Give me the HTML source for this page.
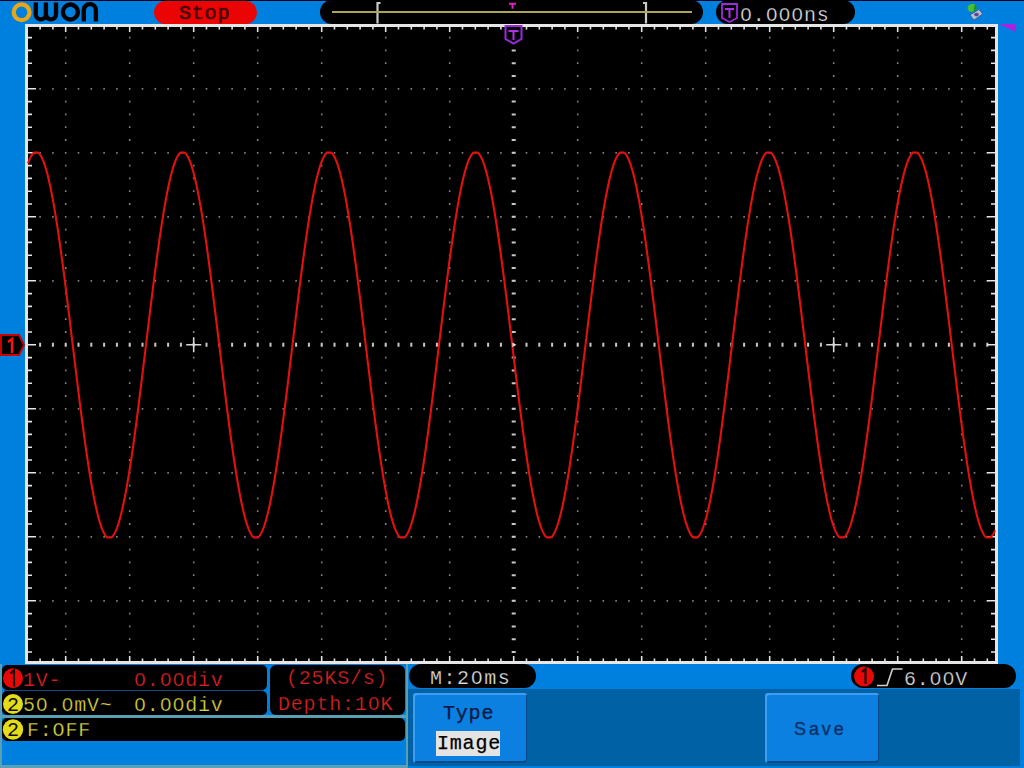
<!DOCTYPE html>
<html><head><meta charset="utf-8"><style>
html,body{margin:0;padding:0;}
body{width:1024px;height:768px;overflow:hidden;position:relative;background:#0080de;font-family:"Liberation Mono", monospace;}
.a{position:absolute;}
.z{position:relative;}
.z::after{content:'';position:absolute;left:3.9px;top:7.8px;width:4.2px;height:5.3px;background:#000;}
.t{position:absolute;white-space:pre;font-family:"Liberation Mono", monospace;font-size:20px;letter-spacing:0.8px;line-height:1;-webkit-text-stroke:0.25px #000;}
</style></head><body>
<div class="a" style="left:0;top:0;width:1024px;height:1.3px;background:#00001c"></div>

<!-- OWON logo -->
<svg class="a" style="left:0;top:0" width="110" height="26" viewBox="0 0 110 26">
<circle cx="21.6" cy="12.3" r="7.9" fill="none" stroke="#eaa614" stroke-width="4.2"/>
<path d="M35.8 2.4V14.3A5.05 5.05 0 0 0 45.9 14.3V2.4M45.9 14.3A5.05 5.05 0 0 0 56 14.3V2.4" fill="none" stroke="#000" stroke-width="4.4"/>
<circle cx="70.4" cy="12" r="7.5" fill="none" stroke="#000" stroke-width="4.4"/>
<path d="M83.8 21.6V10.2A5.6 5.6 0 0 1 95.9 10.2V21.6" fill="none" stroke="#000" stroke-width="4.4"/>
</svg>

<!-- Stop pill -->
<div class="a" style="left:154px;top:1px;width:103px;height:23px;border-radius:11.5px;background:#ea0404"></div>
<div class="t" style="left:179px;top:4px;color:#4a0000;-webkit-text-stroke:0.7px #4a0000">Stop</div>

<!-- time base pill -->
<div class="a" style="left:320px;top:0px;width:383px;height:24px;border-radius:12px/12px;background:#000"></div>
<svg class="a" style="left:370px;top:0;overflow:visible" width="290" height="26">
<path d="M10.5 3h-3v20.5" fill="none" stroke="#c8c8c8" stroke-width="2.2"/>
<path d="M273 3h3v20.5" fill="none" stroke="#c8c8c8" stroke-width="2.2"/>
<path d="M-38 12h360" stroke="#aaa858" stroke-width="2"/>
<path d="M139 3.8h7M142.5 3.8v5" fill="none" stroke="#e020c0" stroke-width="2"/>
</svg>

<!-- trigger pos pill -->
<div class="a" style="left:716px;top:0px;width:139px;height:24px;border-radius:12px;background:#000"></div>
<svg class="a" style="left:716px;top:0" width="26" height="26">
<path d="M6 4h15v14l-7.5 4l-7.5-4z" fill="#000" stroke="#9a2ae0" stroke-width="1.8"/>
<path d="M9 9h9M13.5 9v9" fill="none" stroke="#b030e8" stroke-width="2"/>
</svg>
<div class="t" style="left:740px;top:6px;color:#dcdcdc"><span class="z">0</span>.<span class="z">0</span><span class="z">0</span><span class="z">0</span>ns</div>

<!-- usb icon -->
<svg class="a" style="left:962px;top:0" width="26" height="24">
<path d="M8 15L17 9.4L20.6 14L12 20z" fill="#b4c0d0" stroke="#3a5a90" stroke-width="0.8"/>
<ellipse cx="14.5" cy="14.6" rx="2.4" ry="1.8" fill="#5a4a8a"/>
<ellipse cx="10" cy="7.8" rx="4.4" ry="3.8" transform="rotate(-25 10 7.8)" fill="#44c030"/>
<path d="M12.5 4.5a4 4 0 0 1 1.6 5.5l-2.5 2z" fill="#1e9020"/>
</svg>

<!-- grid -->
<div class="a" style="left:25px;top:24px;width:967px;height:634px;border:3px solid #e6e6e6;background:#000"></div>
<svg class="a" style="left:0;top:0" width="1024" height="768" viewBox="0 0 1024 768">
<path d="M39.3 87.9h1.6v1.8h-1.6zM39.3 151.9h1.6v1.8h-1.6zM39.3 215.9h1.6v1.8h-1.6zM39.3 279.9h1.6v1.8h-1.6zM39.3 407.9h1.6v1.8h-1.6zM39.3 471.9h1.6v1.8h-1.6zM39.3 535.9h1.6v1.8h-1.6zM39.3 599.9h1.6v1.8h-1.6zM52.1 87.9h1.6v1.8h-1.6zM52.1 151.9h1.6v1.8h-1.6zM52.1 215.9h1.6v1.8h-1.6zM52.1 279.9h1.6v1.8h-1.6zM52.1 407.9h1.6v1.8h-1.6zM52.1 471.9h1.6v1.8h-1.6zM52.1 535.9h1.6v1.8h-1.6zM52.1 599.9h1.6v1.8h-1.6zM64.9 36.7h1.6v1.8h-1.6zM64.9 49.5h1.6v1.8h-1.6zM64.9 62.3h1.6v1.8h-1.6zM64.9 75.1h1.6v1.8h-1.6zM64.9 87.9h1.6v1.8h-1.6zM64.9 100.7h1.6v1.8h-1.6zM64.9 113.5h1.6v1.8h-1.6zM64.9 126.3h1.6v1.8h-1.6zM64.9 139.1h1.6v1.8h-1.6zM64.9 151.9h1.6v1.8h-1.6zM64.9 164.7h1.6v1.8h-1.6zM64.9 177.5h1.6v1.8h-1.6zM64.9 190.3h1.6v1.8h-1.6zM64.9 203.1h1.6v1.8h-1.6zM64.9 215.9h1.6v1.8h-1.6zM64.9 228.7h1.6v1.8h-1.6zM64.9 241.5h1.6v1.8h-1.6zM64.9 254.3h1.6v1.8h-1.6zM64.9 267.1h1.6v1.8h-1.6zM64.9 279.9h1.6v1.8h-1.6zM64.9 292.7h1.6v1.8h-1.6zM64.9 305.5h1.6v1.8h-1.6zM64.9 318.3h1.6v1.8h-1.6zM64.9 331.1h1.6v1.8h-1.6zM64.9 343.9h1.6v1.8h-1.6zM64.9 356.7h1.6v1.8h-1.6zM64.9 369.5h1.6v1.8h-1.6zM64.9 382.3h1.6v1.8h-1.6zM64.9 395.1h1.6v1.8h-1.6zM64.9 407.9h1.6v1.8h-1.6zM64.9 420.7h1.6v1.8h-1.6zM64.9 433.5h1.6v1.8h-1.6zM64.9 446.3h1.6v1.8h-1.6zM64.9 459.1h1.6v1.8h-1.6zM64.9 471.9h1.6v1.8h-1.6zM64.9 484.7h1.6v1.8h-1.6zM64.9 497.5h1.6v1.8h-1.6zM64.9 510.3h1.6v1.8h-1.6zM64.9 523.1h1.6v1.8h-1.6zM64.9 535.9h1.6v1.8h-1.6zM64.9 548.7h1.6v1.8h-1.6zM64.9 561.5h1.6v1.8h-1.6zM64.9 574.3h1.6v1.8h-1.6zM64.9 587.1h1.6v1.8h-1.6zM64.9 599.9h1.6v1.8h-1.6zM64.9 612.7h1.6v1.8h-1.6zM64.9 625.5h1.6v1.8h-1.6zM64.9 638.3h1.6v1.8h-1.6zM64.9 651.1h1.6v1.8h-1.6zM77.7 87.9h1.6v1.8h-1.6zM77.7 151.9h1.6v1.8h-1.6zM77.7 215.9h1.6v1.8h-1.6zM77.7 279.9h1.6v1.8h-1.6zM77.7 407.9h1.6v1.8h-1.6zM77.7 471.9h1.6v1.8h-1.6zM77.7 535.9h1.6v1.8h-1.6zM77.7 599.9h1.6v1.8h-1.6zM90.5 87.9h1.6v1.8h-1.6zM90.5 151.9h1.6v1.8h-1.6zM90.5 215.9h1.6v1.8h-1.6zM90.5 279.9h1.6v1.8h-1.6zM90.5 407.9h1.6v1.8h-1.6zM90.5 471.9h1.6v1.8h-1.6zM90.5 535.9h1.6v1.8h-1.6zM90.5 599.9h1.6v1.8h-1.6zM103.3 87.9h1.6v1.8h-1.6zM103.3 151.9h1.6v1.8h-1.6zM103.3 215.9h1.6v1.8h-1.6zM103.3 279.9h1.6v1.8h-1.6zM103.3 407.9h1.6v1.8h-1.6zM103.3 471.9h1.6v1.8h-1.6zM103.3 535.9h1.6v1.8h-1.6zM103.3 599.9h1.6v1.8h-1.6zM116.1 87.9h1.6v1.8h-1.6zM116.1 151.9h1.6v1.8h-1.6zM116.1 215.9h1.6v1.8h-1.6zM116.1 279.9h1.6v1.8h-1.6zM116.1 407.9h1.6v1.8h-1.6zM116.1 471.9h1.6v1.8h-1.6zM116.1 535.9h1.6v1.8h-1.6zM116.1 599.9h1.6v1.8h-1.6zM128.9 36.7h1.6v1.8h-1.6zM128.9 49.5h1.6v1.8h-1.6zM128.9 62.3h1.6v1.8h-1.6zM128.9 75.1h1.6v1.8h-1.6zM128.9 87.9h1.6v1.8h-1.6zM128.9 100.7h1.6v1.8h-1.6zM128.9 113.5h1.6v1.8h-1.6zM128.9 126.3h1.6v1.8h-1.6zM128.9 139.1h1.6v1.8h-1.6zM128.9 151.9h1.6v1.8h-1.6zM128.9 164.7h1.6v1.8h-1.6zM128.9 177.5h1.6v1.8h-1.6zM128.9 190.3h1.6v1.8h-1.6zM128.9 203.1h1.6v1.8h-1.6zM128.9 215.9h1.6v1.8h-1.6zM128.9 228.7h1.6v1.8h-1.6zM128.9 241.5h1.6v1.8h-1.6zM128.9 254.3h1.6v1.8h-1.6zM128.9 267.1h1.6v1.8h-1.6zM128.9 279.9h1.6v1.8h-1.6zM128.9 292.7h1.6v1.8h-1.6zM128.9 305.5h1.6v1.8h-1.6zM128.9 318.3h1.6v1.8h-1.6zM128.9 331.1h1.6v1.8h-1.6zM128.9 343.9h1.6v1.8h-1.6zM128.9 356.7h1.6v1.8h-1.6zM128.9 369.5h1.6v1.8h-1.6zM128.9 382.3h1.6v1.8h-1.6zM128.9 395.1h1.6v1.8h-1.6zM128.9 407.9h1.6v1.8h-1.6zM128.9 420.7h1.6v1.8h-1.6zM128.9 433.5h1.6v1.8h-1.6zM128.9 446.3h1.6v1.8h-1.6zM128.9 459.1h1.6v1.8h-1.6zM128.9 471.9h1.6v1.8h-1.6zM128.9 484.7h1.6v1.8h-1.6zM128.9 497.5h1.6v1.8h-1.6zM128.9 510.3h1.6v1.8h-1.6zM128.9 523.1h1.6v1.8h-1.6zM128.9 535.9h1.6v1.8h-1.6zM128.9 548.7h1.6v1.8h-1.6zM128.9 561.5h1.6v1.8h-1.6zM128.9 574.3h1.6v1.8h-1.6zM128.9 587.1h1.6v1.8h-1.6zM128.9 599.9h1.6v1.8h-1.6zM128.9 612.7h1.6v1.8h-1.6zM128.9 625.5h1.6v1.8h-1.6zM128.9 638.3h1.6v1.8h-1.6zM128.9 651.1h1.6v1.8h-1.6zM141.7 87.9h1.6v1.8h-1.6zM141.7 151.9h1.6v1.8h-1.6zM141.7 215.9h1.6v1.8h-1.6zM141.7 279.9h1.6v1.8h-1.6zM141.7 407.9h1.6v1.8h-1.6zM141.7 471.9h1.6v1.8h-1.6zM141.7 535.9h1.6v1.8h-1.6zM141.7 599.9h1.6v1.8h-1.6zM154.5 87.9h1.6v1.8h-1.6zM154.5 151.9h1.6v1.8h-1.6zM154.5 215.9h1.6v1.8h-1.6zM154.5 279.9h1.6v1.8h-1.6zM154.5 407.9h1.6v1.8h-1.6zM154.5 471.9h1.6v1.8h-1.6zM154.5 535.9h1.6v1.8h-1.6zM154.5 599.9h1.6v1.8h-1.6zM167.3 87.9h1.6v1.8h-1.6zM167.3 151.9h1.6v1.8h-1.6zM167.3 215.9h1.6v1.8h-1.6zM167.3 279.9h1.6v1.8h-1.6zM167.3 407.9h1.6v1.8h-1.6zM167.3 471.9h1.6v1.8h-1.6zM167.3 535.9h1.6v1.8h-1.6zM167.3 599.9h1.6v1.8h-1.6zM180.1 87.9h1.6v1.8h-1.6zM180.1 151.9h1.6v1.8h-1.6zM180.1 215.9h1.6v1.8h-1.6zM180.1 279.9h1.6v1.8h-1.6zM180.1 407.9h1.6v1.8h-1.6zM180.1 471.9h1.6v1.8h-1.6zM180.1 535.9h1.6v1.8h-1.6zM180.1 599.9h1.6v1.8h-1.6zM192.9 36.7h1.6v1.8h-1.6zM192.9 49.5h1.6v1.8h-1.6zM192.9 62.3h1.6v1.8h-1.6zM192.9 75.1h1.6v1.8h-1.6zM192.9 87.9h1.6v1.8h-1.6zM192.9 100.7h1.6v1.8h-1.6zM192.9 113.5h1.6v1.8h-1.6zM192.9 126.3h1.6v1.8h-1.6zM192.9 139.1h1.6v1.8h-1.6zM192.9 151.9h1.6v1.8h-1.6zM192.9 164.7h1.6v1.8h-1.6zM192.9 177.5h1.6v1.8h-1.6zM192.9 190.3h1.6v1.8h-1.6zM192.9 203.1h1.6v1.8h-1.6zM192.9 215.9h1.6v1.8h-1.6zM192.9 228.7h1.6v1.8h-1.6zM192.9 241.5h1.6v1.8h-1.6zM192.9 254.3h1.6v1.8h-1.6zM192.9 267.1h1.6v1.8h-1.6zM192.9 279.9h1.6v1.8h-1.6zM192.9 292.7h1.6v1.8h-1.6zM192.9 305.5h1.6v1.8h-1.6zM192.9 318.3h1.6v1.8h-1.6zM192.9 331.1h1.6v1.8h-1.6zM192.9 343.9h1.6v1.8h-1.6zM192.9 356.7h1.6v1.8h-1.6zM192.9 369.5h1.6v1.8h-1.6zM192.9 382.3h1.6v1.8h-1.6zM192.9 395.1h1.6v1.8h-1.6zM192.9 407.9h1.6v1.8h-1.6zM192.9 420.7h1.6v1.8h-1.6zM192.9 433.5h1.6v1.8h-1.6zM192.9 446.3h1.6v1.8h-1.6zM192.9 459.1h1.6v1.8h-1.6zM192.9 471.9h1.6v1.8h-1.6zM192.9 484.7h1.6v1.8h-1.6zM192.9 497.5h1.6v1.8h-1.6zM192.9 510.3h1.6v1.8h-1.6zM192.9 523.1h1.6v1.8h-1.6zM192.9 535.9h1.6v1.8h-1.6zM192.9 548.7h1.6v1.8h-1.6zM192.9 561.5h1.6v1.8h-1.6zM192.9 574.3h1.6v1.8h-1.6zM192.9 587.1h1.6v1.8h-1.6zM192.9 599.9h1.6v1.8h-1.6zM192.9 612.7h1.6v1.8h-1.6zM192.9 625.5h1.6v1.8h-1.6zM192.9 638.3h1.6v1.8h-1.6zM192.9 651.1h1.6v1.8h-1.6zM205.7 87.9h1.6v1.8h-1.6zM205.7 151.9h1.6v1.8h-1.6zM205.7 215.9h1.6v1.8h-1.6zM205.7 279.9h1.6v1.8h-1.6zM205.7 407.9h1.6v1.8h-1.6zM205.7 471.9h1.6v1.8h-1.6zM205.7 535.9h1.6v1.8h-1.6zM205.7 599.9h1.6v1.8h-1.6zM218.5 87.9h1.6v1.8h-1.6zM218.5 151.9h1.6v1.8h-1.6zM218.5 215.9h1.6v1.8h-1.6zM218.5 279.9h1.6v1.8h-1.6zM218.5 407.9h1.6v1.8h-1.6zM218.5 471.9h1.6v1.8h-1.6zM218.5 535.9h1.6v1.8h-1.6zM218.5 599.9h1.6v1.8h-1.6zM231.3 87.9h1.6v1.8h-1.6zM231.3 151.9h1.6v1.8h-1.6zM231.3 215.9h1.6v1.8h-1.6zM231.3 279.9h1.6v1.8h-1.6zM231.3 407.9h1.6v1.8h-1.6zM231.3 471.9h1.6v1.8h-1.6zM231.3 535.9h1.6v1.8h-1.6zM231.3 599.9h1.6v1.8h-1.6zM244.1 87.9h1.6v1.8h-1.6zM244.1 151.9h1.6v1.8h-1.6zM244.1 215.9h1.6v1.8h-1.6zM244.1 279.9h1.6v1.8h-1.6zM244.1 407.9h1.6v1.8h-1.6zM244.1 471.9h1.6v1.8h-1.6zM244.1 535.9h1.6v1.8h-1.6zM244.1 599.9h1.6v1.8h-1.6zM256.9 36.7h1.6v1.8h-1.6zM256.9 49.5h1.6v1.8h-1.6zM256.9 62.3h1.6v1.8h-1.6zM256.9 75.1h1.6v1.8h-1.6zM256.9 87.9h1.6v1.8h-1.6zM256.9 100.7h1.6v1.8h-1.6zM256.9 113.5h1.6v1.8h-1.6zM256.9 126.3h1.6v1.8h-1.6zM256.9 139.1h1.6v1.8h-1.6zM256.9 151.9h1.6v1.8h-1.6zM256.9 164.7h1.6v1.8h-1.6zM256.9 177.5h1.6v1.8h-1.6zM256.9 190.3h1.6v1.8h-1.6zM256.9 203.1h1.6v1.8h-1.6zM256.9 215.9h1.6v1.8h-1.6zM256.9 228.7h1.6v1.8h-1.6zM256.9 241.5h1.6v1.8h-1.6zM256.9 254.3h1.6v1.8h-1.6zM256.9 267.1h1.6v1.8h-1.6zM256.9 279.9h1.6v1.8h-1.6zM256.9 292.7h1.6v1.8h-1.6zM256.9 305.5h1.6v1.8h-1.6zM256.9 318.3h1.6v1.8h-1.6zM256.9 331.1h1.6v1.8h-1.6zM256.9 343.9h1.6v1.8h-1.6zM256.9 356.7h1.6v1.8h-1.6zM256.9 369.5h1.6v1.8h-1.6zM256.9 382.3h1.6v1.8h-1.6zM256.9 395.1h1.6v1.8h-1.6zM256.9 407.9h1.6v1.8h-1.6zM256.9 420.7h1.6v1.8h-1.6zM256.9 433.5h1.6v1.8h-1.6zM256.9 446.3h1.6v1.8h-1.6zM256.9 459.1h1.6v1.8h-1.6zM256.9 471.9h1.6v1.8h-1.6zM256.9 484.7h1.6v1.8h-1.6zM256.9 497.5h1.6v1.8h-1.6zM256.9 510.3h1.6v1.8h-1.6zM256.9 523.1h1.6v1.8h-1.6zM256.9 535.9h1.6v1.8h-1.6zM256.9 548.7h1.6v1.8h-1.6zM256.9 561.5h1.6v1.8h-1.6zM256.9 574.3h1.6v1.8h-1.6zM256.9 587.1h1.6v1.8h-1.6zM256.9 599.9h1.6v1.8h-1.6zM256.9 612.7h1.6v1.8h-1.6zM256.9 625.5h1.6v1.8h-1.6zM256.9 638.3h1.6v1.8h-1.6zM256.9 651.1h1.6v1.8h-1.6zM269.7 87.9h1.6v1.8h-1.6zM269.7 151.9h1.6v1.8h-1.6zM269.7 215.9h1.6v1.8h-1.6zM269.7 279.9h1.6v1.8h-1.6zM269.7 407.9h1.6v1.8h-1.6zM269.7 471.9h1.6v1.8h-1.6zM269.7 535.9h1.6v1.8h-1.6zM269.7 599.9h1.6v1.8h-1.6zM282.5 87.9h1.6v1.8h-1.6zM282.5 151.9h1.6v1.8h-1.6zM282.5 215.9h1.6v1.8h-1.6zM282.5 279.9h1.6v1.8h-1.6zM282.5 407.9h1.6v1.8h-1.6zM282.5 471.9h1.6v1.8h-1.6zM282.5 535.9h1.6v1.8h-1.6zM282.5 599.9h1.6v1.8h-1.6zM295.3 87.9h1.6v1.8h-1.6zM295.3 151.9h1.6v1.8h-1.6zM295.3 215.9h1.6v1.8h-1.6zM295.3 279.9h1.6v1.8h-1.6zM295.3 407.9h1.6v1.8h-1.6zM295.3 471.9h1.6v1.8h-1.6zM295.3 535.9h1.6v1.8h-1.6zM295.3 599.9h1.6v1.8h-1.6zM308.1 87.9h1.6v1.8h-1.6zM308.1 151.9h1.6v1.8h-1.6zM308.1 215.9h1.6v1.8h-1.6zM308.1 279.9h1.6v1.8h-1.6zM308.1 407.9h1.6v1.8h-1.6zM308.1 471.9h1.6v1.8h-1.6zM308.1 535.9h1.6v1.8h-1.6zM308.1 599.9h1.6v1.8h-1.6zM320.9 36.7h1.6v1.8h-1.6zM320.9 49.5h1.6v1.8h-1.6zM320.9 62.3h1.6v1.8h-1.6zM320.9 75.1h1.6v1.8h-1.6zM320.9 87.9h1.6v1.8h-1.6zM320.9 100.7h1.6v1.8h-1.6zM320.9 113.5h1.6v1.8h-1.6zM320.9 126.3h1.6v1.8h-1.6zM320.9 139.1h1.6v1.8h-1.6zM320.9 151.9h1.6v1.8h-1.6zM320.9 164.7h1.6v1.8h-1.6zM320.9 177.5h1.6v1.8h-1.6zM320.9 190.3h1.6v1.8h-1.6zM320.9 203.1h1.6v1.8h-1.6zM320.9 215.9h1.6v1.8h-1.6zM320.9 228.7h1.6v1.8h-1.6zM320.9 241.5h1.6v1.8h-1.6zM320.9 254.3h1.6v1.8h-1.6zM320.9 267.1h1.6v1.8h-1.6zM320.9 279.9h1.6v1.8h-1.6zM320.9 292.7h1.6v1.8h-1.6zM320.9 305.5h1.6v1.8h-1.6zM320.9 318.3h1.6v1.8h-1.6zM320.9 331.1h1.6v1.8h-1.6zM320.9 343.9h1.6v1.8h-1.6zM320.9 356.7h1.6v1.8h-1.6zM320.9 369.5h1.6v1.8h-1.6zM320.9 382.3h1.6v1.8h-1.6zM320.9 395.1h1.6v1.8h-1.6zM320.9 407.9h1.6v1.8h-1.6zM320.9 420.7h1.6v1.8h-1.6zM320.9 433.5h1.6v1.8h-1.6zM320.9 446.3h1.6v1.8h-1.6zM320.9 459.1h1.6v1.8h-1.6zM320.9 471.9h1.6v1.8h-1.6zM320.9 484.7h1.6v1.8h-1.6zM320.9 497.5h1.6v1.8h-1.6zM320.9 510.3h1.6v1.8h-1.6zM320.9 523.1h1.6v1.8h-1.6zM320.9 535.9h1.6v1.8h-1.6zM320.9 548.7h1.6v1.8h-1.6zM320.9 561.5h1.6v1.8h-1.6zM320.9 574.3h1.6v1.8h-1.6zM320.9 587.1h1.6v1.8h-1.6zM320.9 599.9h1.6v1.8h-1.6zM320.9 612.7h1.6v1.8h-1.6zM320.9 625.5h1.6v1.8h-1.6zM320.9 638.3h1.6v1.8h-1.6zM320.9 651.1h1.6v1.8h-1.6zM333.7 87.9h1.6v1.8h-1.6zM333.7 151.9h1.6v1.8h-1.6zM333.7 215.9h1.6v1.8h-1.6zM333.7 279.9h1.6v1.8h-1.6zM333.7 407.9h1.6v1.8h-1.6zM333.7 471.9h1.6v1.8h-1.6zM333.7 535.9h1.6v1.8h-1.6zM333.7 599.9h1.6v1.8h-1.6zM346.5 87.9h1.6v1.8h-1.6zM346.5 151.9h1.6v1.8h-1.6zM346.5 215.9h1.6v1.8h-1.6zM346.5 279.9h1.6v1.8h-1.6zM346.5 407.9h1.6v1.8h-1.6zM346.5 471.9h1.6v1.8h-1.6zM346.5 535.9h1.6v1.8h-1.6zM346.5 599.9h1.6v1.8h-1.6zM359.3 87.9h1.6v1.8h-1.6zM359.3 151.9h1.6v1.8h-1.6zM359.3 215.9h1.6v1.8h-1.6zM359.3 279.9h1.6v1.8h-1.6zM359.3 407.9h1.6v1.8h-1.6zM359.3 471.9h1.6v1.8h-1.6zM359.3 535.9h1.6v1.8h-1.6zM359.3 599.9h1.6v1.8h-1.6zM372.1 87.9h1.6v1.8h-1.6zM372.1 151.9h1.6v1.8h-1.6zM372.1 215.9h1.6v1.8h-1.6zM372.1 279.9h1.6v1.8h-1.6zM372.1 407.9h1.6v1.8h-1.6zM372.1 471.9h1.6v1.8h-1.6zM372.1 535.9h1.6v1.8h-1.6zM372.1 599.9h1.6v1.8h-1.6zM384.9 36.7h1.6v1.8h-1.6zM384.9 49.5h1.6v1.8h-1.6zM384.9 62.3h1.6v1.8h-1.6zM384.9 75.1h1.6v1.8h-1.6zM384.9 87.9h1.6v1.8h-1.6zM384.9 100.7h1.6v1.8h-1.6zM384.9 113.5h1.6v1.8h-1.6zM384.9 126.3h1.6v1.8h-1.6zM384.9 139.1h1.6v1.8h-1.6zM384.9 151.9h1.6v1.8h-1.6zM384.9 164.7h1.6v1.8h-1.6zM384.9 177.5h1.6v1.8h-1.6zM384.9 190.3h1.6v1.8h-1.6zM384.9 203.1h1.6v1.8h-1.6zM384.9 215.9h1.6v1.8h-1.6zM384.9 228.7h1.6v1.8h-1.6zM384.9 241.5h1.6v1.8h-1.6zM384.9 254.3h1.6v1.8h-1.6zM384.9 267.1h1.6v1.8h-1.6zM384.9 279.9h1.6v1.8h-1.6zM384.9 292.7h1.6v1.8h-1.6zM384.9 305.5h1.6v1.8h-1.6zM384.9 318.3h1.6v1.8h-1.6zM384.9 331.1h1.6v1.8h-1.6zM384.9 343.9h1.6v1.8h-1.6zM384.9 356.7h1.6v1.8h-1.6zM384.9 369.5h1.6v1.8h-1.6zM384.9 382.3h1.6v1.8h-1.6zM384.9 395.1h1.6v1.8h-1.6zM384.9 407.9h1.6v1.8h-1.6zM384.9 420.7h1.6v1.8h-1.6zM384.9 433.5h1.6v1.8h-1.6zM384.9 446.3h1.6v1.8h-1.6zM384.9 459.1h1.6v1.8h-1.6zM384.9 471.9h1.6v1.8h-1.6zM384.9 484.7h1.6v1.8h-1.6zM384.9 497.5h1.6v1.8h-1.6zM384.9 510.3h1.6v1.8h-1.6zM384.9 523.1h1.6v1.8h-1.6zM384.9 535.9h1.6v1.8h-1.6zM384.9 548.7h1.6v1.8h-1.6zM384.9 561.5h1.6v1.8h-1.6zM384.9 574.3h1.6v1.8h-1.6zM384.9 587.1h1.6v1.8h-1.6zM384.9 599.9h1.6v1.8h-1.6zM384.9 612.7h1.6v1.8h-1.6zM384.9 625.5h1.6v1.8h-1.6zM384.9 638.3h1.6v1.8h-1.6zM384.9 651.1h1.6v1.8h-1.6zM397.7 87.9h1.6v1.8h-1.6zM397.7 151.9h1.6v1.8h-1.6zM397.7 215.9h1.6v1.8h-1.6zM397.7 279.9h1.6v1.8h-1.6zM397.7 407.9h1.6v1.8h-1.6zM397.7 471.9h1.6v1.8h-1.6zM397.7 535.9h1.6v1.8h-1.6zM397.7 599.9h1.6v1.8h-1.6zM410.5 87.9h1.6v1.8h-1.6zM410.5 151.9h1.6v1.8h-1.6zM410.5 215.9h1.6v1.8h-1.6zM410.5 279.9h1.6v1.8h-1.6zM410.5 407.9h1.6v1.8h-1.6zM410.5 471.9h1.6v1.8h-1.6zM410.5 535.9h1.6v1.8h-1.6zM410.5 599.9h1.6v1.8h-1.6zM423.3 87.9h1.6v1.8h-1.6zM423.3 151.9h1.6v1.8h-1.6zM423.3 215.9h1.6v1.8h-1.6zM423.3 279.9h1.6v1.8h-1.6zM423.3 407.9h1.6v1.8h-1.6zM423.3 471.9h1.6v1.8h-1.6zM423.3 535.9h1.6v1.8h-1.6zM423.3 599.9h1.6v1.8h-1.6zM436.1 87.9h1.6v1.8h-1.6zM436.1 151.9h1.6v1.8h-1.6zM436.1 215.9h1.6v1.8h-1.6zM436.1 279.9h1.6v1.8h-1.6zM436.1 407.9h1.6v1.8h-1.6zM436.1 471.9h1.6v1.8h-1.6zM436.1 535.9h1.6v1.8h-1.6zM436.1 599.9h1.6v1.8h-1.6zM448.9 36.7h1.6v1.8h-1.6zM448.9 49.5h1.6v1.8h-1.6zM448.9 62.3h1.6v1.8h-1.6zM448.9 75.1h1.6v1.8h-1.6zM448.9 87.9h1.6v1.8h-1.6zM448.9 100.7h1.6v1.8h-1.6zM448.9 113.5h1.6v1.8h-1.6zM448.9 126.3h1.6v1.8h-1.6zM448.9 139.1h1.6v1.8h-1.6zM448.9 151.9h1.6v1.8h-1.6zM448.9 164.7h1.6v1.8h-1.6zM448.9 177.5h1.6v1.8h-1.6zM448.9 190.3h1.6v1.8h-1.6zM448.9 203.1h1.6v1.8h-1.6zM448.9 215.9h1.6v1.8h-1.6zM448.9 228.7h1.6v1.8h-1.6zM448.9 241.5h1.6v1.8h-1.6zM448.9 254.3h1.6v1.8h-1.6zM448.9 267.1h1.6v1.8h-1.6zM448.9 279.9h1.6v1.8h-1.6zM448.9 292.7h1.6v1.8h-1.6zM448.9 305.5h1.6v1.8h-1.6zM448.9 318.3h1.6v1.8h-1.6zM448.9 331.1h1.6v1.8h-1.6zM448.9 343.9h1.6v1.8h-1.6zM448.9 356.7h1.6v1.8h-1.6zM448.9 369.5h1.6v1.8h-1.6zM448.9 382.3h1.6v1.8h-1.6zM448.9 395.1h1.6v1.8h-1.6zM448.9 407.9h1.6v1.8h-1.6zM448.9 420.7h1.6v1.8h-1.6zM448.9 433.5h1.6v1.8h-1.6zM448.9 446.3h1.6v1.8h-1.6zM448.9 459.1h1.6v1.8h-1.6zM448.9 471.9h1.6v1.8h-1.6zM448.9 484.7h1.6v1.8h-1.6zM448.9 497.5h1.6v1.8h-1.6zM448.9 510.3h1.6v1.8h-1.6zM448.9 523.1h1.6v1.8h-1.6zM448.9 535.9h1.6v1.8h-1.6zM448.9 548.7h1.6v1.8h-1.6zM448.9 561.5h1.6v1.8h-1.6zM448.9 574.3h1.6v1.8h-1.6zM448.9 587.1h1.6v1.8h-1.6zM448.9 599.9h1.6v1.8h-1.6zM448.9 612.7h1.6v1.8h-1.6zM448.9 625.5h1.6v1.8h-1.6zM448.9 638.3h1.6v1.8h-1.6zM448.9 651.1h1.6v1.8h-1.6zM461.7 87.9h1.6v1.8h-1.6zM461.7 151.9h1.6v1.8h-1.6zM461.7 215.9h1.6v1.8h-1.6zM461.7 279.9h1.6v1.8h-1.6zM461.7 407.9h1.6v1.8h-1.6zM461.7 471.9h1.6v1.8h-1.6zM461.7 535.9h1.6v1.8h-1.6zM461.7 599.9h1.6v1.8h-1.6zM474.5 87.9h1.6v1.8h-1.6zM474.5 151.9h1.6v1.8h-1.6zM474.5 215.9h1.6v1.8h-1.6zM474.5 279.9h1.6v1.8h-1.6zM474.5 407.9h1.6v1.8h-1.6zM474.5 471.9h1.6v1.8h-1.6zM474.5 535.9h1.6v1.8h-1.6zM474.5 599.9h1.6v1.8h-1.6zM487.3 87.9h1.6v1.8h-1.6zM487.3 151.9h1.6v1.8h-1.6zM487.3 215.9h1.6v1.8h-1.6zM487.3 279.9h1.6v1.8h-1.6zM487.3 407.9h1.6v1.8h-1.6zM487.3 471.9h1.6v1.8h-1.6zM487.3 535.9h1.6v1.8h-1.6zM487.3 599.9h1.6v1.8h-1.6zM500.1 87.9h1.6v1.8h-1.6zM500.1 151.9h1.6v1.8h-1.6zM500.1 215.9h1.6v1.8h-1.6zM500.1 279.9h1.6v1.8h-1.6zM500.1 407.9h1.6v1.8h-1.6zM500.1 471.9h1.6v1.8h-1.6zM500.1 535.9h1.6v1.8h-1.6zM500.1 599.9h1.6v1.8h-1.6zM512.9 87.9h1.6v1.8h-1.6zM512.9 151.9h1.6v1.8h-1.6zM512.9 215.9h1.6v1.8h-1.6zM512.9 279.9h1.6v1.8h-1.6zM512.9 407.9h1.6v1.8h-1.6zM512.9 471.9h1.6v1.8h-1.6zM512.9 535.9h1.6v1.8h-1.6zM512.9 599.9h1.6v1.8h-1.6zM525.7 87.9h1.6v1.8h-1.6zM525.7 151.9h1.6v1.8h-1.6zM525.7 215.9h1.6v1.8h-1.6zM525.7 279.9h1.6v1.8h-1.6zM525.7 407.9h1.6v1.8h-1.6zM525.7 471.9h1.6v1.8h-1.6zM525.7 535.9h1.6v1.8h-1.6zM525.7 599.9h1.6v1.8h-1.6zM538.5 87.9h1.6v1.8h-1.6zM538.5 151.9h1.6v1.8h-1.6zM538.5 215.9h1.6v1.8h-1.6zM538.5 279.9h1.6v1.8h-1.6zM538.5 407.9h1.6v1.8h-1.6zM538.5 471.9h1.6v1.8h-1.6zM538.5 535.9h1.6v1.8h-1.6zM538.5 599.9h1.6v1.8h-1.6zM551.3 87.9h1.6v1.8h-1.6zM551.3 151.9h1.6v1.8h-1.6zM551.3 215.9h1.6v1.8h-1.6zM551.3 279.9h1.6v1.8h-1.6zM551.3 407.9h1.6v1.8h-1.6zM551.3 471.9h1.6v1.8h-1.6zM551.3 535.9h1.6v1.8h-1.6zM551.3 599.9h1.6v1.8h-1.6zM564.1 87.9h1.6v1.8h-1.6zM564.1 151.9h1.6v1.8h-1.6zM564.1 215.9h1.6v1.8h-1.6zM564.1 279.9h1.6v1.8h-1.6zM564.1 407.9h1.6v1.8h-1.6zM564.1 471.9h1.6v1.8h-1.6zM564.1 535.9h1.6v1.8h-1.6zM564.1 599.9h1.6v1.8h-1.6zM576.9 36.7h1.6v1.8h-1.6zM576.9 49.5h1.6v1.8h-1.6zM576.9 62.3h1.6v1.8h-1.6zM576.9 75.1h1.6v1.8h-1.6zM576.9 87.9h1.6v1.8h-1.6zM576.9 100.7h1.6v1.8h-1.6zM576.9 113.5h1.6v1.8h-1.6zM576.9 126.3h1.6v1.8h-1.6zM576.9 139.1h1.6v1.8h-1.6zM576.9 151.9h1.6v1.8h-1.6zM576.9 164.7h1.6v1.8h-1.6zM576.9 177.5h1.6v1.8h-1.6zM576.9 190.3h1.6v1.8h-1.6zM576.9 203.1h1.6v1.8h-1.6zM576.9 215.9h1.6v1.8h-1.6zM576.9 228.7h1.6v1.8h-1.6zM576.9 241.5h1.6v1.8h-1.6zM576.9 254.3h1.6v1.8h-1.6zM576.9 267.1h1.6v1.8h-1.6zM576.9 279.9h1.6v1.8h-1.6zM576.9 292.7h1.6v1.8h-1.6zM576.9 305.5h1.6v1.8h-1.6zM576.9 318.3h1.6v1.8h-1.6zM576.9 331.1h1.6v1.8h-1.6zM576.9 343.9h1.6v1.8h-1.6zM576.9 356.7h1.6v1.8h-1.6zM576.9 369.5h1.6v1.8h-1.6zM576.9 382.3h1.6v1.8h-1.6zM576.9 395.1h1.6v1.8h-1.6zM576.9 407.9h1.6v1.8h-1.6zM576.9 420.7h1.6v1.8h-1.6zM576.9 433.5h1.6v1.8h-1.6zM576.9 446.3h1.6v1.8h-1.6zM576.9 459.1h1.6v1.8h-1.6zM576.9 471.9h1.6v1.8h-1.6zM576.9 484.7h1.6v1.8h-1.6zM576.9 497.5h1.6v1.8h-1.6zM576.9 510.3h1.6v1.8h-1.6zM576.9 523.1h1.6v1.8h-1.6zM576.9 535.9h1.6v1.8h-1.6zM576.9 548.7h1.6v1.8h-1.6zM576.9 561.5h1.6v1.8h-1.6zM576.9 574.3h1.6v1.8h-1.6zM576.9 587.1h1.6v1.8h-1.6zM576.9 599.9h1.6v1.8h-1.6zM576.9 612.7h1.6v1.8h-1.6zM576.9 625.5h1.6v1.8h-1.6zM576.9 638.3h1.6v1.8h-1.6zM576.9 651.1h1.6v1.8h-1.6zM589.7 87.9h1.6v1.8h-1.6zM589.7 151.9h1.6v1.8h-1.6zM589.7 215.9h1.6v1.8h-1.6zM589.7 279.9h1.6v1.8h-1.6zM589.7 407.9h1.6v1.8h-1.6zM589.7 471.9h1.6v1.8h-1.6zM589.7 535.9h1.6v1.8h-1.6zM589.7 599.9h1.6v1.8h-1.6zM602.5 87.9h1.6v1.8h-1.6zM602.5 151.9h1.6v1.8h-1.6zM602.5 215.9h1.6v1.8h-1.6zM602.5 279.9h1.6v1.8h-1.6zM602.5 407.9h1.6v1.8h-1.6zM602.5 471.9h1.6v1.8h-1.6zM602.5 535.9h1.6v1.8h-1.6zM602.5 599.9h1.6v1.8h-1.6zM615.3 87.9h1.6v1.8h-1.6zM615.3 151.9h1.6v1.8h-1.6zM615.3 215.9h1.6v1.8h-1.6zM615.3 279.9h1.6v1.8h-1.6zM615.3 407.9h1.6v1.8h-1.6zM615.3 471.9h1.6v1.8h-1.6zM615.3 535.9h1.6v1.8h-1.6zM615.3 599.9h1.6v1.8h-1.6zM628.1 87.9h1.6v1.8h-1.6zM628.1 151.9h1.6v1.8h-1.6zM628.1 215.9h1.6v1.8h-1.6zM628.1 279.9h1.6v1.8h-1.6zM628.1 407.9h1.6v1.8h-1.6zM628.1 471.9h1.6v1.8h-1.6zM628.1 535.9h1.6v1.8h-1.6zM628.1 599.9h1.6v1.8h-1.6zM640.9 36.7h1.6v1.8h-1.6zM640.9 49.5h1.6v1.8h-1.6zM640.9 62.3h1.6v1.8h-1.6zM640.9 75.1h1.6v1.8h-1.6zM640.9 87.9h1.6v1.8h-1.6zM640.9 100.7h1.6v1.8h-1.6zM640.9 113.5h1.6v1.8h-1.6zM640.9 126.3h1.6v1.8h-1.6zM640.9 139.1h1.6v1.8h-1.6zM640.9 151.9h1.6v1.8h-1.6zM640.9 164.7h1.6v1.8h-1.6zM640.9 177.5h1.6v1.8h-1.6zM640.9 190.3h1.6v1.8h-1.6zM640.9 203.1h1.6v1.8h-1.6zM640.9 215.9h1.6v1.8h-1.6zM640.9 228.7h1.6v1.8h-1.6zM640.9 241.5h1.6v1.8h-1.6zM640.9 254.3h1.6v1.8h-1.6zM640.9 267.1h1.6v1.8h-1.6zM640.9 279.9h1.6v1.8h-1.6zM640.9 292.7h1.6v1.8h-1.6zM640.9 305.5h1.6v1.8h-1.6zM640.9 318.3h1.6v1.8h-1.6zM640.9 331.1h1.6v1.8h-1.6zM640.9 343.9h1.6v1.8h-1.6zM640.9 356.7h1.6v1.8h-1.6zM640.9 369.5h1.6v1.8h-1.6zM640.9 382.3h1.6v1.8h-1.6zM640.9 395.1h1.6v1.8h-1.6zM640.9 407.9h1.6v1.8h-1.6zM640.9 420.7h1.6v1.8h-1.6zM640.9 433.5h1.6v1.8h-1.6zM640.9 446.3h1.6v1.8h-1.6zM640.9 459.1h1.6v1.8h-1.6zM640.9 471.9h1.6v1.8h-1.6zM640.9 484.7h1.6v1.8h-1.6zM640.9 497.5h1.6v1.8h-1.6zM640.9 510.3h1.6v1.8h-1.6zM640.9 523.1h1.6v1.8h-1.6zM640.9 535.9h1.6v1.8h-1.6zM640.9 548.7h1.6v1.8h-1.6zM640.9 561.5h1.6v1.8h-1.6zM640.9 574.3h1.6v1.8h-1.6zM640.9 587.1h1.6v1.8h-1.6zM640.9 599.9h1.6v1.8h-1.6zM640.9 612.7h1.6v1.8h-1.6zM640.9 625.5h1.6v1.8h-1.6zM640.9 638.3h1.6v1.8h-1.6zM640.9 651.1h1.6v1.8h-1.6zM653.7 87.9h1.6v1.8h-1.6zM653.7 151.9h1.6v1.8h-1.6zM653.7 215.9h1.6v1.8h-1.6zM653.7 279.9h1.6v1.8h-1.6zM653.7 407.9h1.6v1.8h-1.6zM653.7 471.9h1.6v1.8h-1.6zM653.7 535.9h1.6v1.8h-1.6zM653.7 599.9h1.6v1.8h-1.6zM666.5 87.9h1.6v1.8h-1.6zM666.5 151.9h1.6v1.8h-1.6zM666.5 215.9h1.6v1.8h-1.6zM666.5 279.9h1.6v1.8h-1.6zM666.5 407.9h1.6v1.8h-1.6zM666.5 471.9h1.6v1.8h-1.6zM666.5 535.9h1.6v1.8h-1.6zM666.5 599.9h1.6v1.8h-1.6zM679.3 87.9h1.6v1.8h-1.6zM679.3 151.9h1.6v1.8h-1.6zM679.3 215.9h1.6v1.8h-1.6zM679.3 279.9h1.6v1.8h-1.6zM679.3 407.9h1.6v1.8h-1.6zM679.3 471.9h1.6v1.8h-1.6zM679.3 535.9h1.6v1.8h-1.6zM679.3 599.9h1.6v1.8h-1.6zM692.1 87.9h1.6v1.8h-1.6zM692.1 151.9h1.6v1.8h-1.6zM692.1 215.9h1.6v1.8h-1.6zM692.1 279.9h1.6v1.8h-1.6zM692.1 407.9h1.6v1.8h-1.6zM692.1 471.9h1.6v1.8h-1.6zM692.1 535.9h1.6v1.8h-1.6zM692.1 599.9h1.6v1.8h-1.6zM704.9 36.7h1.6v1.8h-1.6zM704.9 49.5h1.6v1.8h-1.6zM704.9 62.3h1.6v1.8h-1.6zM704.9 75.1h1.6v1.8h-1.6zM704.9 87.9h1.6v1.8h-1.6zM704.9 100.7h1.6v1.8h-1.6zM704.9 113.5h1.6v1.8h-1.6zM704.9 126.3h1.6v1.8h-1.6zM704.9 139.1h1.6v1.8h-1.6zM704.9 151.9h1.6v1.8h-1.6zM704.9 164.7h1.6v1.8h-1.6zM704.9 177.5h1.6v1.8h-1.6zM704.9 190.3h1.6v1.8h-1.6zM704.9 203.1h1.6v1.8h-1.6zM704.9 215.9h1.6v1.8h-1.6zM704.9 228.7h1.6v1.8h-1.6zM704.9 241.5h1.6v1.8h-1.6zM704.9 254.3h1.6v1.8h-1.6zM704.9 267.1h1.6v1.8h-1.6zM704.9 279.9h1.6v1.8h-1.6zM704.9 292.7h1.6v1.8h-1.6zM704.9 305.5h1.6v1.8h-1.6zM704.9 318.3h1.6v1.8h-1.6zM704.9 331.1h1.6v1.8h-1.6zM704.9 343.9h1.6v1.8h-1.6zM704.9 356.7h1.6v1.8h-1.6zM704.9 369.5h1.6v1.8h-1.6zM704.9 382.3h1.6v1.8h-1.6zM704.9 395.1h1.6v1.8h-1.6zM704.9 407.9h1.6v1.8h-1.6zM704.9 420.7h1.6v1.8h-1.6zM704.9 433.5h1.6v1.8h-1.6zM704.9 446.3h1.6v1.8h-1.6zM704.9 459.1h1.6v1.8h-1.6zM704.9 471.9h1.6v1.8h-1.6zM704.9 484.7h1.6v1.8h-1.6zM704.9 497.5h1.6v1.8h-1.6zM704.9 510.3h1.6v1.8h-1.6zM704.9 523.1h1.6v1.8h-1.6zM704.9 535.9h1.6v1.8h-1.6zM704.9 548.7h1.6v1.8h-1.6zM704.9 561.5h1.6v1.8h-1.6zM704.9 574.3h1.6v1.8h-1.6zM704.9 587.1h1.6v1.8h-1.6zM704.9 599.9h1.6v1.8h-1.6zM704.9 612.7h1.6v1.8h-1.6zM704.9 625.5h1.6v1.8h-1.6zM704.9 638.3h1.6v1.8h-1.6zM704.9 651.1h1.6v1.8h-1.6zM717.7 87.9h1.6v1.8h-1.6zM717.7 151.9h1.6v1.8h-1.6zM717.7 215.9h1.6v1.8h-1.6zM717.7 279.9h1.6v1.8h-1.6zM717.7 407.9h1.6v1.8h-1.6zM717.7 471.9h1.6v1.8h-1.6zM717.7 535.9h1.6v1.8h-1.6zM717.7 599.9h1.6v1.8h-1.6zM730.5 87.9h1.6v1.8h-1.6zM730.5 151.9h1.6v1.8h-1.6zM730.5 215.9h1.6v1.8h-1.6zM730.5 279.9h1.6v1.8h-1.6zM730.5 407.9h1.6v1.8h-1.6zM730.5 471.9h1.6v1.8h-1.6zM730.5 535.9h1.6v1.8h-1.6zM730.5 599.9h1.6v1.8h-1.6zM743.3 87.9h1.6v1.8h-1.6zM743.3 151.9h1.6v1.8h-1.6zM743.3 215.9h1.6v1.8h-1.6zM743.3 279.9h1.6v1.8h-1.6zM743.3 407.9h1.6v1.8h-1.6zM743.3 471.9h1.6v1.8h-1.6zM743.3 535.9h1.6v1.8h-1.6zM743.3 599.9h1.6v1.8h-1.6zM756.1 87.9h1.6v1.8h-1.6zM756.1 151.9h1.6v1.8h-1.6zM756.1 215.9h1.6v1.8h-1.6zM756.1 279.9h1.6v1.8h-1.6zM756.1 407.9h1.6v1.8h-1.6zM756.1 471.9h1.6v1.8h-1.6zM756.1 535.9h1.6v1.8h-1.6zM756.1 599.9h1.6v1.8h-1.6zM768.9 36.7h1.6v1.8h-1.6zM768.9 49.5h1.6v1.8h-1.6zM768.9 62.3h1.6v1.8h-1.6zM768.9 75.1h1.6v1.8h-1.6zM768.9 87.9h1.6v1.8h-1.6zM768.9 100.7h1.6v1.8h-1.6zM768.9 113.5h1.6v1.8h-1.6zM768.9 126.3h1.6v1.8h-1.6zM768.9 139.1h1.6v1.8h-1.6zM768.9 151.9h1.6v1.8h-1.6zM768.9 164.7h1.6v1.8h-1.6zM768.9 177.5h1.6v1.8h-1.6zM768.9 190.3h1.6v1.8h-1.6zM768.9 203.1h1.6v1.8h-1.6zM768.9 215.9h1.6v1.8h-1.6zM768.9 228.7h1.6v1.8h-1.6zM768.9 241.5h1.6v1.8h-1.6zM768.9 254.3h1.6v1.8h-1.6zM768.9 267.1h1.6v1.8h-1.6zM768.9 279.9h1.6v1.8h-1.6zM768.9 292.7h1.6v1.8h-1.6zM768.9 305.5h1.6v1.8h-1.6zM768.9 318.3h1.6v1.8h-1.6zM768.9 331.1h1.6v1.8h-1.6zM768.9 343.9h1.6v1.8h-1.6zM768.9 356.7h1.6v1.8h-1.6zM768.9 369.5h1.6v1.8h-1.6zM768.9 382.3h1.6v1.8h-1.6zM768.9 395.1h1.6v1.8h-1.6zM768.9 407.9h1.6v1.8h-1.6zM768.9 420.7h1.6v1.8h-1.6zM768.9 433.5h1.6v1.8h-1.6zM768.9 446.3h1.6v1.8h-1.6zM768.9 459.1h1.6v1.8h-1.6zM768.9 471.9h1.6v1.8h-1.6zM768.9 484.7h1.6v1.8h-1.6zM768.9 497.5h1.6v1.8h-1.6zM768.9 510.3h1.6v1.8h-1.6zM768.9 523.1h1.6v1.8h-1.6zM768.9 535.9h1.6v1.8h-1.6zM768.9 548.7h1.6v1.8h-1.6zM768.9 561.5h1.6v1.8h-1.6zM768.9 574.3h1.6v1.8h-1.6zM768.9 587.1h1.6v1.8h-1.6zM768.9 599.9h1.6v1.8h-1.6zM768.9 612.7h1.6v1.8h-1.6zM768.9 625.5h1.6v1.8h-1.6zM768.9 638.3h1.6v1.8h-1.6zM768.9 651.1h1.6v1.8h-1.6zM781.7 87.9h1.6v1.8h-1.6zM781.7 151.9h1.6v1.8h-1.6zM781.7 215.9h1.6v1.8h-1.6zM781.7 279.9h1.6v1.8h-1.6zM781.7 407.9h1.6v1.8h-1.6zM781.7 471.9h1.6v1.8h-1.6zM781.7 535.9h1.6v1.8h-1.6zM781.7 599.9h1.6v1.8h-1.6zM794.5 87.9h1.6v1.8h-1.6zM794.5 151.9h1.6v1.8h-1.6zM794.5 215.9h1.6v1.8h-1.6zM794.5 279.9h1.6v1.8h-1.6zM794.5 407.9h1.6v1.8h-1.6zM794.5 471.9h1.6v1.8h-1.6zM794.5 535.9h1.6v1.8h-1.6zM794.5 599.9h1.6v1.8h-1.6zM807.3 87.9h1.6v1.8h-1.6zM807.3 151.9h1.6v1.8h-1.6zM807.3 215.9h1.6v1.8h-1.6zM807.3 279.9h1.6v1.8h-1.6zM807.3 407.9h1.6v1.8h-1.6zM807.3 471.9h1.6v1.8h-1.6zM807.3 535.9h1.6v1.8h-1.6zM807.3 599.9h1.6v1.8h-1.6zM820.1 87.9h1.6v1.8h-1.6zM820.1 151.9h1.6v1.8h-1.6zM820.1 215.9h1.6v1.8h-1.6zM820.1 279.9h1.6v1.8h-1.6zM820.1 407.9h1.6v1.8h-1.6zM820.1 471.9h1.6v1.8h-1.6zM820.1 535.9h1.6v1.8h-1.6zM820.1 599.9h1.6v1.8h-1.6zM832.9 36.7h1.6v1.8h-1.6zM832.9 49.5h1.6v1.8h-1.6zM832.9 62.3h1.6v1.8h-1.6zM832.9 75.1h1.6v1.8h-1.6zM832.9 87.9h1.6v1.8h-1.6zM832.9 100.7h1.6v1.8h-1.6zM832.9 113.5h1.6v1.8h-1.6zM832.9 126.3h1.6v1.8h-1.6zM832.9 139.1h1.6v1.8h-1.6zM832.9 151.9h1.6v1.8h-1.6zM832.9 164.7h1.6v1.8h-1.6zM832.9 177.5h1.6v1.8h-1.6zM832.9 190.3h1.6v1.8h-1.6zM832.9 203.1h1.6v1.8h-1.6zM832.9 215.9h1.6v1.8h-1.6zM832.9 228.7h1.6v1.8h-1.6zM832.9 241.5h1.6v1.8h-1.6zM832.9 254.3h1.6v1.8h-1.6zM832.9 267.1h1.6v1.8h-1.6zM832.9 279.9h1.6v1.8h-1.6zM832.9 292.7h1.6v1.8h-1.6zM832.9 305.5h1.6v1.8h-1.6zM832.9 318.3h1.6v1.8h-1.6zM832.9 331.1h1.6v1.8h-1.6zM832.9 343.9h1.6v1.8h-1.6zM832.9 356.7h1.6v1.8h-1.6zM832.9 369.5h1.6v1.8h-1.6zM832.9 382.3h1.6v1.8h-1.6zM832.9 395.1h1.6v1.8h-1.6zM832.9 407.9h1.6v1.8h-1.6zM832.9 420.7h1.6v1.8h-1.6zM832.9 433.5h1.6v1.8h-1.6zM832.9 446.3h1.6v1.8h-1.6zM832.9 459.1h1.6v1.8h-1.6zM832.9 471.9h1.6v1.8h-1.6zM832.9 484.7h1.6v1.8h-1.6zM832.9 497.5h1.6v1.8h-1.6zM832.9 510.3h1.6v1.8h-1.6zM832.9 523.1h1.6v1.8h-1.6zM832.9 535.9h1.6v1.8h-1.6zM832.9 548.7h1.6v1.8h-1.6zM832.9 561.5h1.6v1.8h-1.6zM832.9 574.3h1.6v1.8h-1.6zM832.9 587.1h1.6v1.8h-1.6zM832.9 599.9h1.6v1.8h-1.6zM832.9 612.7h1.6v1.8h-1.6zM832.9 625.5h1.6v1.8h-1.6zM832.9 638.3h1.6v1.8h-1.6zM832.9 651.1h1.6v1.8h-1.6zM845.7 87.9h1.6v1.8h-1.6zM845.7 151.9h1.6v1.8h-1.6zM845.7 215.9h1.6v1.8h-1.6zM845.7 279.9h1.6v1.8h-1.6zM845.7 407.9h1.6v1.8h-1.6zM845.7 471.9h1.6v1.8h-1.6zM845.7 535.9h1.6v1.8h-1.6zM845.7 599.9h1.6v1.8h-1.6zM858.5 87.9h1.6v1.8h-1.6zM858.5 151.9h1.6v1.8h-1.6zM858.5 215.9h1.6v1.8h-1.6zM858.5 279.9h1.6v1.8h-1.6zM858.5 407.9h1.6v1.8h-1.6zM858.5 471.9h1.6v1.8h-1.6zM858.5 535.9h1.6v1.8h-1.6zM858.5 599.9h1.6v1.8h-1.6zM871.3 87.9h1.6v1.8h-1.6zM871.3 151.9h1.6v1.8h-1.6zM871.3 215.9h1.6v1.8h-1.6zM871.3 279.9h1.6v1.8h-1.6zM871.3 407.9h1.6v1.8h-1.6zM871.3 471.9h1.6v1.8h-1.6zM871.3 535.9h1.6v1.8h-1.6zM871.3 599.9h1.6v1.8h-1.6zM884.1 87.9h1.6v1.8h-1.6zM884.1 151.9h1.6v1.8h-1.6zM884.1 215.9h1.6v1.8h-1.6zM884.1 279.9h1.6v1.8h-1.6zM884.1 407.9h1.6v1.8h-1.6zM884.1 471.9h1.6v1.8h-1.6zM884.1 535.9h1.6v1.8h-1.6zM884.1 599.9h1.6v1.8h-1.6zM896.9 36.7h1.6v1.8h-1.6zM896.9 49.5h1.6v1.8h-1.6zM896.9 62.3h1.6v1.8h-1.6zM896.9 75.1h1.6v1.8h-1.6zM896.9 87.9h1.6v1.8h-1.6zM896.9 100.7h1.6v1.8h-1.6zM896.9 113.5h1.6v1.8h-1.6zM896.9 126.3h1.6v1.8h-1.6zM896.9 139.1h1.6v1.8h-1.6zM896.9 151.9h1.6v1.8h-1.6zM896.9 164.7h1.6v1.8h-1.6zM896.9 177.5h1.6v1.8h-1.6zM896.9 190.3h1.6v1.8h-1.6zM896.9 203.1h1.6v1.8h-1.6zM896.9 215.9h1.6v1.8h-1.6zM896.9 228.7h1.6v1.8h-1.6zM896.9 241.5h1.6v1.8h-1.6zM896.9 254.3h1.6v1.8h-1.6zM896.9 267.1h1.6v1.8h-1.6zM896.9 279.9h1.6v1.8h-1.6zM896.9 292.7h1.6v1.8h-1.6zM896.9 305.5h1.6v1.8h-1.6zM896.9 318.3h1.6v1.8h-1.6zM896.9 331.1h1.6v1.8h-1.6zM896.9 343.9h1.6v1.8h-1.6zM896.9 356.7h1.6v1.8h-1.6zM896.9 369.5h1.6v1.8h-1.6zM896.9 382.3h1.6v1.8h-1.6zM896.9 395.1h1.6v1.8h-1.6zM896.9 407.9h1.6v1.8h-1.6zM896.9 420.7h1.6v1.8h-1.6zM896.9 433.5h1.6v1.8h-1.6zM896.9 446.3h1.6v1.8h-1.6zM896.9 459.1h1.6v1.8h-1.6zM896.9 471.9h1.6v1.8h-1.6zM896.9 484.7h1.6v1.8h-1.6zM896.9 497.5h1.6v1.8h-1.6zM896.9 510.3h1.6v1.8h-1.6zM896.9 523.1h1.6v1.8h-1.6zM896.9 535.9h1.6v1.8h-1.6zM896.9 548.7h1.6v1.8h-1.6zM896.9 561.5h1.6v1.8h-1.6zM896.9 574.3h1.6v1.8h-1.6zM896.9 587.1h1.6v1.8h-1.6zM896.9 599.9h1.6v1.8h-1.6zM896.9 612.7h1.6v1.8h-1.6zM896.9 625.5h1.6v1.8h-1.6zM896.9 638.3h1.6v1.8h-1.6zM896.9 651.1h1.6v1.8h-1.6zM909.7 87.9h1.6v1.8h-1.6zM909.7 151.9h1.6v1.8h-1.6zM909.7 215.9h1.6v1.8h-1.6zM909.7 279.9h1.6v1.8h-1.6zM909.7 407.9h1.6v1.8h-1.6zM909.7 471.9h1.6v1.8h-1.6zM909.7 535.9h1.6v1.8h-1.6zM909.7 599.9h1.6v1.8h-1.6zM922.5 87.9h1.6v1.8h-1.6zM922.5 151.9h1.6v1.8h-1.6zM922.5 215.9h1.6v1.8h-1.6zM922.5 279.9h1.6v1.8h-1.6zM922.5 407.9h1.6v1.8h-1.6zM922.5 471.9h1.6v1.8h-1.6zM922.5 535.9h1.6v1.8h-1.6zM922.5 599.9h1.6v1.8h-1.6zM935.3 87.9h1.6v1.8h-1.6zM935.3 151.9h1.6v1.8h-1.6zM935.3 215.9h1.6v1.8h-1.6zM935.3 279.9h1.6v1.8h-1.6zM935.3 407.9h1.6v1.8h-1.6zM935.3 471.9h1.6v1.8h-1.6zM935.3 535.9h1.6v1.8h-1.6zM935.3 599.9h1.6v1.8h-1.6zM948.1 87.9h1.6v1.8h-1.6zM948.1 151.9h1.6v1.8h-1.6zM948.1 215.9h1.6v1.8h-1.6zM948.1 279.9h1.6v1.8h-1.6zM948.1 407.9h1.6v1.8h-1.6zM948.1 471.9h1.6v1.8h-1.6zM948.1 535.9h1.6v1.8h-1.6zM948.1 599.9h1.6v1.8h-1.6zM960.9 36.7h1.6v1.8h-1.6zM960.9 49.5h1.6v1.8h-1.6zM960.9 62.3h1.6v1.8h-1.6zM960.9 75.1h1.6v1.8h-1.6zM960.9 87.9h1.6v1.8h-1.6zM960.9 100.7h1.6v1.8h-1.6zM960.9 113.5h1.6v1.8h-1.6zM960.9 126.3h1.6v1.8h-1.6zM960.9 139.1h1.6v1.8h-1.6zM960.9 151.9h1.6v1.8h-1.6zM960.9 164.7h1.6v1.8h-1.6zM960.9 177.5h1.6v1.8h-1.6zM960.9 190.3h1.6v1.8h-1.6zM960.9 203.1h1.6v1.8h-1.6zM960.9 215.9h1.6v1.8h-1.6zM960.9 228.7h1.6v1.8h-1.6zM960.9 241.5h1.6v1.8h-1.6zM960.9 254.3h1.6v1.8h-1.6zM960.9 267.1h1.6v1.8h-1.6zM960.9 279.9h1.6v1.8h-1.6zM960.9 292.7h1.6v1.8h-1.6zM960.9 305.5h1.6v1.8h-1.6zM960.9 318.3h1.6v1.8h-1.6zM960.9 331.1h1.6v1.8h-1.6zM960.9 343.9h1.6v1.8h-1.6zM960.9 356.7h1.6v1.8h-1.6zM960.9 369.5h1.6v1.8h-1.6zM960.9 382.3h1.6v1.8h-1.6zM960.9 395.1h1.6v1.8h-1.6zM960.9 407.9h1.6v1.8h-1.6zM960.9 420.7h1.6v1.8h-1.6zM960.9 433.5h1.6v1.8h-1.6zM960.9 446.3h1.6v1.8h-1.6zM960.9 459.1h1.6v1.8h-1.6zM960.9 471.9h1.6v1.8h-1.6zM960.9 484.7h1.6v1.8h-1.6zM960.9 497.5h1.6v1.8h-1.6zM960.9 510.3h1.6v1.8h-1.6zM960.9 523.1h1.6v1.8h-1.6zM960.9 535.9h1.6v1.8h-1.6zM960.9 548.7h1.6v1.8h-1.6zM960.9 561.5h1.6v1.8h-1.6zM960.9 574.3h1.6v1.8h-1.6zM960.9 587.1h1.6v1.8h-1.6zM960.9 599.9h1.6v1.8h-1.6zM960.9 612.7h1.6v1.8h-1.6zM960.9 625.5h1.6v1.8h-1.6zM960.9 638.3h1.6v1.8h-1.6zM960.9 651.1h1.6v1.8h-1.6zM973.7 87.9h1.6v1.8h-1.6zM973.7 151.9h1.6v1.8h-1.6zM973.7 215.9h1.6v1.8h-1.6zM973.7 279.9h1.6v1.8h-1.6zM973.7 407.9h1.6v1.8h-1.6zM973.7 471.9h1.6v1.8h-1.6zM973.7 535.9h1.6v1.8h-1.6zM973.7 599.9h1.6v1.8h-1.6zM986.5 87.9h1.6v1.8h-1.6zM986.5 151.9h1.6v1.8h-1.6zM986.5 215.9h1.6v1.8h-1.6zM986.5 279.9h1.6v1.8h-1.6zM986.5 407.9h1.6v1.8h-1.6zM986.5 471.9h1.6v1.8h-1.6zM986.5 535.9h1.6v1.8h-1.6zM986.5 599.9h1.6v1.8h-1.6z" fill="#808080"/>
<path d="M39.1 342.8h2v4h-2zM51.9 342.8h2v4h-2zM64.7 342.8h2v4h-2zM77.5 342.8h2v4h-2zM90.3 342.8h2v4h-2zM103.1 342.8h2v4h-2zM115.9 342.8h2v4h-2zM128.7 342.8h2v4h-2zM141.5 342.8h2v4h-2zM154.3 342.8h2v4h-2zM167.1 342.8h2v4h-2zM179.9 342.8h2v4h-2zM192.7 342.8h2v4h-2zM205.5 342.8h2v4h-2zM218.3 342.8h2v4h-2zM231.1 342.8h2v4h-2zM243.9 342.8h2v4h-2zM256.7 342.8h2v4h-2zM269.5 342.8h2v4h-2zM282.3 342.8h2v4h-2zM295.1 342.8h2v4h-2zM307.9 342.8h2v4h-2zM320.7 342.8h2v4h-2zM333.5 342.8h2v4h-2zM346.3 342.8h2v4h-2zM359.1 342.8h2v4h-2zM371.9 342.8h2v4h-2zM384.7 342.8h2v4h-2zM397.5 342.8h2v4h-2zM410.3 342.8h2v4h-2zM423.1 342.8h2v4h-2zM435.9 342.8h2v4h-2zM448.7 342.8h2v4h-2zM461.5 342.8h2v4h-2zM474.3 342.8h2v4h-2zM487.1 342.8h2v4h-2zM499.9 342.8h2v4h-2zM525.5 342.8h2v4h-2zM538.3 342.8h2v4h-2zM551.1 342.8h2v4h-2zM563.9 342.8h2v4h-2zM576.7 342.8h2v4h-2zM589.5 342.8h2v4h-2zM602.3 342.8h2v4h-2zM615.1 342.8h2v4h-2zM627.9 342.8h2v4h-2zM640.7 342.8h2v4h-2zM653.5 342.8h2v4h-2zM666.3 342.8h2v4h-2zM679.1 342.8h2v4h-2zM691.9 342.8h2v4h-2zM704.7 342.8h2v4h-2zM717.5 342.8h2v4h-2zM730.3 342.8h2v4h-2zM743.1 342.8h2v4h-2zM755.9 342.8h2v4h-2zM768.7 342.8h2v4h-2zM781.5 342.8h2v4h-2zM794.3 342.8h2v4h-2zM807.1 342.8h2v4h-2zM819.9 342.8h2v4h-2zM832.7 342.8h2v4h-2zM845.5 342.8h2v4h-2zM858.3 342.8h2v4h-2zM871.1 342.8h2v4h-2zM883.9 342.8h2v4h-2zM896.7 342.8h2v4h-2zM909.5 342.8h2v4h-2zM922.3 342.8h2v4h-2zM935.1 342.8h2v4h-2zM947.9 342.8h2v4h-2zM960.7 342.8h2v4h-2zM973.5 342.8h2v4h-2zM986.3 342.8h2v4h-2zM511.7 36.6h4v2h-4zM511.7 49.4h4v2h-4zM511.7 62.2h4v2h-4zM511.7 75h4v2h-4zM511.7 87.8h4v2h-4zM511.7 100.6h4v2h-4zM511.7 113.4h4v2h-4zM511.7 126.2h4v2h-4zM511.7 139h4v2h-4zM511.7 151.8h4v2h-4zM511.7 164.6h4v2h-4zM511.7 177.4h4v2h-4zM511.7 190.2h4v2h-4zM511.7 203h4v2h-4zM511.7 215.8h4v2h-4zM511.7 228.6h4v2h-4zM511.7 241.4h4v2h-4zM511.7 254.2h4v2h-4zM511.7 267h4v2h-4zM511.7 279.8h4v2h-4zM511.7 292.6h4v2h-4zM511.7 305.4h4v2h-4zM511.7 318.2h4v2h-4zM511.7 331h4v2h-4zM511.7 356.6h4v2h-4zM511.7 369.4h4v2h-4zM511.7 382.2h4v2h-4zM511.7 395h4v2h-4zM511.7 407.8h4v2h-4zM511.7 420.6h4v2h-4zM511.7 433.4h4v2h-4zM511.7 446.2h4v2h-4zM511.7 459h4v2h-4zM511.7 471.8h4v2h-4zM511.7 484.6h4v2h-4zM511.7 497.4h4v2h-4zM511.7 510.2h4v2h-4zM511.7 523h4v2h-4zM511.7 535.8h4v2h-4zM511.7 548.6h4v2h-4zM511.7 561.4h4v2h-4zM511.7 574.2h4v2h-4zM511.7 587h4v2h-4zM511.7 599.8h4v2h-4zM511.7 612.6h4v2h-4zM511.7 625.4h4v2h-4zM511.7 638.2h4v2h-4zM511.7 651h4v2h-4z" fill="#c8c8c8"/>
<path d="M186.2 344h15v1.6h-15zM192.9 337.3h1.6v15h-1.6zM826.2 344h15v1.6h-15zM832.9 337.3h1.6v15h-1.6z" fill="#d8d8d8"/>
<path d="M39.3 27h1.6v2.5h-1.6zM39.3 658.5h1.6v2.5h-1.6zM52.1 27h1.6v2.5h-1.6zM52.1 658.5h1.6v2.5h-1.6zM64.9 27h1.6v5h-1.6zM64.9 656h1.6v5h-1.6zM77.7 27h1.6v2.5h-1.6zM77.7 658.5h1.6v2.5h-1.6zM90.5 27h1.6v2.5h-1.6zM90.5 658.5h1.6v2.5h-1.6zM103.3 27h1.6v2.5h-1.6zM103.3 658.5h1.6v2.5h-1.6zM116.1 27h1.6v2.5h-1.6zM116.1 658.5h1.6v2.5h-1.6zM128.9 27h1.6v5h-1.6zM128.9 656h1.6v5h-1.6zM141.7 27h1.6v2.5h-1.6zM141.7 658.5h1.6v2.5h-1.6zM154.5 27h1.6v2.5h-1.6zM154.5 658.5h1.6v2.5h-1.6zM167.3 27h1.6v2.5h-1.6zM167.3 658.5h1.6v2.5h-1.6zM180.1 27h1.6v2.5h-1.6zM180.1 658.5h1.6v2.5h-1.6zM192.9 27h1.6v5h-1.6zM192.9 656h1.6v5h-1.6zM205.7 27h1.6v2.5h-1.6zM205.7 658.5h1.6v2.5h-1.6zM218.5 27h1.6v2.5h-1.6zM218.5 658.5h1.6v2.5h-1.6zM231.3 27h1.6v2.5h-1.6zM231.3 658.5h1.6v2.5h-1.6zM244.1 27h1.6v2.5h-1.6zM244.1 658.5h1.6v2.5h-1.6zM256.9 27h1.6v5h-1.6zM256.9 656h1.6v5h-1.6zM269.7 27h1.6v2.5h-1.6zM269.7 658.5h1.6v2.5h-1.6zM282.5 27h1.6v2.5h-1.6zM282.5 658.5h1.6v2.5h-1.6zM295.3 27h1.6v2.5h-1.6zM295.3 658.5h1.6v2.5h-1.6zM308.1 27h1.6v2.5h-1.6zM308.1 658.5h1.6v2.5h-1.6zM320.9 27h1.6v5h-1.6zM320.9 656h1.6v5h-1.6zM333.7 27h1.6v2.5h-1.6zM333.7 658.5h1.6v2.5h-1.6zM346.5 27h1.6v2.5h-1.6zM346.5 658.5h1.6v2.5h-1.6zM359.3 27h1.6v2.5h-1.6zM359.3 658.5h1.6v2.5h-1.6zM372.1 27h1.6v2.5h-1.6zM372.1 658.5h1.6v2.5h-1.6zM384.9 27h1.6v5h-1.6zM384.9 656h1.6v5h-1.6zM397.7 27h1.6v2.5h-1.6zM397.7 658.5h1.6v2.5h-1.6zM410.5 27h1.6v2.5h-1.6zM410.5 658.5h1.6v2.5h-1.6zM423.3 27h1.6v2.5h-1.6zM423.3 658.5h1.6v2.5h-1.6zM436.1 27h1.6v2.5h-1.6zM436.1 658.5h1.6v2.5h-1.6zM448.9 27h1.6v5h-1.6zM448.9 656h1.6v5h-1.6zM461.7 27h1.6v2.5h-1.6zM461.7 658.5h1.6v2.5h-1.6zM474.5 27h1.6v2.5h-1.6zM474.5 658.5h1.6v2.5h-1.6zM487.3 27h1.6v2.5h-1.6zM487.3 658.5h1.6v2.5h-1.6zM500.1 27h1.6v2.5h-1.6zM500.1 658.5h1.6v2.5h-1.6zM512.9 27h1.6v5h-1.6zM512.9 656h1.6v5h-1.6zM525.7 27h1.6v2.5h-1.6zM525.7 658.5h1.6v2.5h-1.6zM538.5 27h1.6v2.5h-1.6zM538.5 658.5h1.6v2.5h-1.6zM551.3 27h1.6v2.5h-1.6zM551.3 658.5h1.6v2.5h-1.6zM564.1 27h1.6v2.5h-1.6zM564.1 658.5h1.6v2.5h-1.6zM576.9 27h1.6v5h-1.6zM576.9 656h1.6v5h-1.6zM589.7 27h1.6v2.5h-1.6zM589.7 658.5h1.6v2.5h-1.6zM602.5 27h1.6v2.5h-1.6zM602.5 658.5h1.6v2.5h-1.6zM615.3 27h1.6v2.5h-1.6zM615.3 658.5h1.6v2.5h-1.6zM628.1 27h1.6v2.5h-1.6zM628.1 658.5h1.6v2.5h-1.6zM640.9 27h1.6v5h-1.6zM640.9 656h1.6v5h-1.6zM653.7 27h1.6v2.5h-1.6zM653.7 658.5h1.6v2.5h-1.6zM666.5 27h1.6v2.5h-1.6zM666.5 658.5h1.6v2.5h-1.6zM679.3 27h1.6v2.5h-1.6zM679.3 658.5h1.6v2.5h-1.6zM692.1 27h1.6v2.5h-1.6zM692.1 658.5h1.6v2.5h-1.6zM704.9 27h1.6v5h-1.6zM704.9 656h1.6v5h-1.6zM717.7 27h1.6v2.5h-1.6zM717.7 658.5h1.6v2.5h-1.6zM730.5 27h1.6v2.5h-1.6zM730.5 658.5h1.6v2.5h-1.6zM743.3 27h1.6v2.5h-1.6zM743.3 658.5h1.6v2.5h-1.6zM756.1 27h1.6v2.5h-1.6zM756.1 658.5h1.6v2.5h-1.6zM768.9 27h1.6v5h-1.6zM768.9 656h1.6v5h-1.6zM781.7 27h1.6v2.5h-1.6zM781.7 658.5h1.6v2.5h-1.6zM794.5 27h1.6v2.5h-1.6zM794.5 658.5h1.6v2.5h-1.6zM807.3 27h1.6v2.5h-1.6zM807.3 658.5h1.6v2.5h-1.6zM820.1 27h1.6v2.5h-1.6zM820.1 658.5h1.6v2.5h-1.6zM832.9 27h1.6v5h-1.6zM832.9 656h1.6v5h-1.6zM845.7 27h1.6v2.5h-1.6zM845.7 658.5h1.6v2.5h-1.6zM858.5 27h1.6v2.5h-1.6zM858.5 658.5h1.6v2.5h-1.6zM871.3 27h1.6v2.5h-1.6zM871.3 658.5h1.6v2.5h-1.6zM884.1 27h1.6v2.5h-1.6zM884.1 658.5h1.6v2.5h-1.6zM896.9 27h1.6v5h-1.6zM896.9 656h1.6v5h-1.6zM909.7 27h1.6v2.5h-1.6zM909.7 658.5h1.6v2.5h-1.6zM922.5 27h1.6v2.5h-1.6zM922.5 658.5h1.6v2.5h-1.6zM935.3 27h1.6v2.5h-1.6zM935.3 658.5h1.6v2.5h-1.6zM948.1 27h1.6v2.5h-1.6zM948.1 658.5h1.6v2.5h-1.6zM960.9 27h1.6v5h-1.6zM960.9 656h1.6v5h-1.6zM973.7 27h1.6v2.5h-1.6zM973.7 658.5h1.6v2.5h-1.6zM986.5 27h1.6v2.5h-1.6zM986.5 658.5h1.6v2.5h-1.6zM28 36.8h4v1.6h-4zM991 36.8h4v1.6h-4zM28 49.6h4v1.6h-4zM991 49.6h4v1.6h-4zM28 62.4h4v1.6h-4zM991 62.4h4v1.6h-4zM28 75.2h4v1.6h-4zM991 75.2h4v1.6h-4zM28 88h8v1.6h-8zM987 88h8v1.6h-8zM28 100.8h4v1.6h-4zM991 100.8h4v1.6h-4zM28 113.6h4v1.6h-4zM991 113.6h4v1.6h-4zM28 126.4h4v1.6h-4zM991 126.4h4v1.6h-4zM28 139.2h4v1.6h-4zM991 139.2h4v1.6h-4zM28 152h8v1.6h-8zM987 152h8v1.6h-8zM28 164.8h4v1.6h-4zM991 164.8h4v1.6h-4zM28 177.6h4v1.6h-4zM991 177.6h4v1.6h-4zM28 190.4h4v1.6h-4zM991 190.4h4v1.6h-4zM28 203.2h4v1.6h-4zM991 203.2h4v1.6h-4zM28 216h8v1.6h-8zM987 216h8v1.6h-8zM28 228.8h4v1.6h-4zM991 228.8h4v1.6h-4zM28 241.6h4v1.6h-4zM991 241.6h4v1.6h-4zM28 254.4h4v1.6h-4zM991 254.4h4v1.6h-4zM28 267.2h4v1.6h-4zM991 267.2h4v1.6h-4zM28 280h8v1.6h-8zM987 280h8v1.6h-8zM28 292.8h4v1.6h-4zM991 292.8h4v1.6h-4zM28 305.6h4v1.6h-4zM991 305.6h4v1.6h-4zM28 318.4h4v1.6h-4zM991 318.4h4v1.6h-4zM28 331.2h4v1.6h-4zM991 331.2h4v1.6h-4zM28 344h8v1.6h-8zM987 344h8v1.6h-8zM28 356.8h4v1.6h-4zM991 356.8h4v1.6h-4zM28 369.6h4v1.6h-4zM991 369.6h4v1.6h-4zM28 382.4h4v1.6h-4zM991 382.4h4v1.6h-4zM28 395.2h4v1.6h-4zM991 395.2h4v1.6h-4zM28 408h8v1.6h-8zM987 408h8v1.6h-8zM28 420.8h4v1.6h-4zM991 420.8h4v1.6h-4zM28 433.6h4v1.6h-4zM991 433.6h4v1.6h-4zM28 446.4h4v1.6h-4zM991 446.4h4v1.6h-4zM28 459.2h4v1.6h-4zM991 459.2h4v1.6h-4zM28 472h8v1.6h-8zM987 472h8v1.6h-8zM28 484.8h4v1.6h-4zM991 484.8h4v1.6h-4zM28 497.6h4v1.6h-4zM991 497.6h4v1.6h-4zM28 510.4h4v1.6h-4zM991 510.4h4v1.6h-4zM28 523.2h4v1.6h-4zM991 523.2h4v1.6h-4zM28 536h8v1.6h-8zM987 536h8v1.6h-8zM28 548.8h4v1.6h-4zM991 548.8h4v1.6h-4zM28 561.6h4v1.6h-4zM991 561.6h4v1.6h-4zM28 574.4h4v1.6h-4zM991 574.4h4v1.6h-4zM28 587.2h4v1.6h-4zM991 587.2h4v1.6h-4zM28 600h8v1.6h-8zM987 600h8v1.6h-8zM28 612.8h4v1.6h-4zM991 612.8h4v1.6h-4zM28 625.6h4v1.6h-4zM991 625.6h4v1.6h-4zM28 638.4h4v1.6h-4zM991 638.4h4v1.6h-4zM28 651.2h4v1.6h-4zM991 651.2h4v1.6h-4z" fill="#e6e6e6"/>
<polyline points="28,163.37 28.5,162 29,160.72 29.5,159.52 30,158.4 30.5,157.38 31,156.43 31.5,155.58 32,154.81 32.5,154.13 33,153.54 33.5,153.03 34,152.61 34.5,152.6 35,152.6 35.5,152.6 36,152.6 36.5,152.6 37,152.6 37.5,152.6 38,152.6 38.5,152.85 39,153.32 39.5,153.88 40,154.53 40.5,155.26 41,156.08 41.5,156.99 42,157.98 42.5,159.06 43,160.23 43.5,161.48 44,162.81 44.5,164.23 45,165.73 45.5,167.32 46,168.98 46.5,170.73 47,172.56 47.5,174.46 48,176.45 48.5,178.51 49,180.65 49.5,182.86 50,185.15 50.5,187.51 51,189.95 51.5,192.45 52,195.03 52.5,197.68 53,200.39 53.5,203.17 54,206.01 54.5,208.92 55,211.89 55.5,214.93 56,218.02 56.5,221.17 57,224.38 57.5,227.64 58,230.96 58.5,234.33 59,237.75 59.5,241.21 60,244.73 60.5,248.3 61,251.9 61.5,255.55 62,259.25 62.5,262.98 63,266.75 63.5,270.55 64,274.39 64.5,278.26 65,282.16 65.5,286.1 66,290.05 66.5,294.04 67,298.04 67.5,302.07 68,306.12 68.5,310.19 69,314.27 69.5,318.37 70,322.48 70.5,326.59 71,330.72 71.5,334.86 72,338.99 72.5,343.14 73,347.28 73.5,351.42 74,355.56 74.5,359.69 75,363.82 75.5,367.94 76,372.04 76.5,376.14 77,380.22 77.5,384.28 78,388.33 78.5,392.36 79,396.36 79.5,400.34 80,404.3 80.5,408.23 81,412.13 81.5,415.99 82,419.83 82.5,423.63 83,427.4 83.5,431.12 84,434.81 84.5,438.46 85,442.06 85.5,445.62 86,449.13 86.5,452.6 87,456.01 87.5,459.38 88,462.69 88.5,465.95 89,469.15 89.5,472.29 90,475.38 90.5,478.41 91,481.37 91.5,484.27 92,487.11 92.5,489.88 93,492.59 93.5,495.23 94,497.8 94.5,500.3 95,502.73 95.5,505.08 96,507.36 96.5,509.57 97,511.7 97.5,513.75 98,515.73 98.5,517.63 99,519.45 99.5,521.19 100,522.85 100.5,524.42 101,525.91 101.5,527.32 102,528.65 102.5,529.89 103,531.05 103.5,532.12 104,533.11 104.5,534.01 105,534.82 105.5,535.54 106,536.18 106.5,536.73 107,537.19 107.5,537.4 108,537.4 108.5,537.4 109,537.4 109.5,537.4 110,537.4 110.5,537.4 111,537.4 111.5,537.35 112,536.92 112.5,536.41 113,535.81 113.5,535.12 114,534.34 114.5,533.48 115,532.53 115.5,531.49 116,530.37 116.5,529.16 117,527.87 117.5,526.49 118,525.03 118.5,523.49 119,521.86 119.5,520.15 120,518.37 120.5,516.5 121,514.55 121.5,512.53 122,510.43 122.5,508.25 123,506 123.5,503.68 124,501.28 124.5,498.81 125,496.27 125.5,493.65 126,490.98 126.5,488.23 127,485.42 127.5,482.54 128,479.6 128.5,476.6 129,473.54 129.5,470.41 130,467.24 130.5,464 131,460.71 131.5,457.37 132,453.97 132.5,450.53 133,447.03 133.5,443.49 134,439.91 134.5,436.28 135,432.6 135.5,428.89 136,425.14 136.5,421.36 137,417.53 137.5,413.68 138,409.79 138.5,405.87 139,401.93 139.5,397.96 140,393.96 140.5,389.94 141,385.9 141.5,381.85 142,377.77 142.5,373.68 143,369.58 143.5,365.47 144,361.34 144.5,357.21 145,353.08 145.5,348.93 146,344.79 146.5,340.65 147,336.51 147.5,332.37 148,328.24 148.5,324.12 149,320.01 149.5,315.91 150,311.82 150.5,307.75 151,303.69 151.5,299.65 152,295.64 152.5,291.64 153,287.68 153.5,283.73 154,279.82 154.5,275.94 155,272.08 155.5,268.26 156,264.48 156.5,260.73 157,257.03 157.5,253.36 158,249.73 158.5,246.15 159,242.62 159.5,239.13 160,235.69 160.5,232.3 161,228.96 161.5,225.67 162,222.44 162.5,219.27 163,216.16 163.5,213.1 164,210.1 164.5,207.17 165,204.3 165.5,201.49 166,198.75 166.5,196.08 167,193.48 167.5,190.94 168,188.48 168.5,186.09 169,183.77 169.5,181.53 170,179.36 170.5,177.26 171,175.25 171.5,173.31 172,171.45 172.5,169.67 173,167.97 173.5,166.36 174,164.82 174.5,163.37 175,162 175.5,160.72 176,159.52 176.5,158.4 177,157.38 177.5,156.43 178,155.58 178.5,154.81 179,154.13 179.5,153.54 180,153.03 180.5,152.61 181,152.6 181.5,152.6 182,152.6 182.5,152.6 183,152.6 183.5,152.6 184,152.6 184.5,152.6 185,152.85 185.5,153.32 186,153.88 186.5,154.53 187,155.26 187.5,156.08 188,156.99 188.5,157.98 189,159.06 189.5,160.23 190,161.48 190.5,162.81 191,164.23 191.5,165.73 192,167.32 192.5,168.98 193,170.73 193.5,172.56 194,174.46 194.5,176.45 195,178.51 195.5,180.65 196,182.86 196.5,185.15 197,187.51 197.5,189.95 198,192.45 198.5,195.03 199,197.68 199.5,200.39 200,203.17 200.5,206.01 201,208.92 201.5,211.89 202,214.93 202.5,218.02 203,221.17 203.5,224.38 204,227.64 204.5,230.96 205,234.33 205.5,237.75 206,241.21 206.5,244.73 207,248.3 207.5,251.9 208,255.55 208.5,259.25 209,262.98 209.5,266.75 210,270.55 210.5,274.39 211,278.26 211.5,282.16 212,286.1 212.5,290.05 213,294.04 213.5,298.04 214,302.07 214.5,306.12 215,310.19 215.5,314.27 216,318.37 216.5,322.48 217,326.59 217.5,330.72 218,334.86 218.5,338.99 219,343.14 219.5,347.28 220,351.42 220.5,355.56 221,359.69 221.5,363.82 222,367.94 222.5,372.04 223,376.14 223.5,380.22 224,384.28 224.5,388.33 225,392.36 225.5,396.36 226,400.34 226.5,404.3 227,408.23 227.5,412.13 228,415.99 228.5,419.83 229,423.63 229.5,427.4 230,431.12 230.5,434.81 231,438.46 231.5,442.06 232,445.62 232.5,449.13 233,452.6 233.5,456.01 234,459.38 234.5,462.69 235,465.95 235.5,469.15 236,472.29 236.5,475.38 237,478.41 237.5,481.37 238,484.27 238.5,487.11 239,489.88 239.5,492.59 240,495.23 240.5,497.8 241,500.3 241.5,502.73 242,505.08 242.5,507.36 243,509.57 243.5,511.7 244,513.75 244.5,515.73 245,517.63 245.5,519.45 246,521.19 246.5,522.85 247,524.42 247.5,525.91 248,527.32 248.5,528.65 249,529.89 249.5,531.05 250,532.12 250.5,533.11 251,534.01 251.5,534.82 252,535.54 252.5,536.18 253,536.73 253.5,537.19 254,537.4 254.5,537.4 255,537.4 255.5,537.4 256,537.4 256.5,537.4 257,537.4 257.5,537.4 258,537.35 258.5,536.92 259,536.41 259.5,535.81 260,535.12 260.5,534.34 261,533.48 261.5,532.53 262,531.49 262.5,530.37 263,529.16 263.5,527.87 264,526.49 264.5,525.03 265,523.49 265.5,521.86 266,520.15 266.5,518.37 267,516.5 267.5,514.55 268,512.53 268.5,510.43 269,508.25 269.5,506 270,503.68 270.5,501.28 271,498.81 271.5,496.27 272,493.65 272.5,490.98 273,488.23 273.5,485.42 274,482.54 274.5,479.6 275,476.6 275.5,473.54 276,470.41 276.5,467.24 277,464 277.5,460.71 278,457.37 278.5,453.97 279,450.53 279.5,447.03 280,443.49 280.5,439.91 281,436.28 281.5,432.6 282,428.89 282.5,425.14 283,421.36 283.5,417.53 284,413.68 284.5,409.79 285,405.87 285.5,401.93 286,397.96 286.5,393.96 287,389.94 287.5,385.9 288,381.85 288.5,377.77 289,373.68 289.5,369.58 290,365.47 290.5,361.34 291,357.21 291.5,353.08 292,348.93 292.5,344.79 293,340.65 293.5,336.51 294,332.37 294.5,328.24 295,324.12 295.5,320.01 296,315.91 296.5,311.82 297,307.75 297.5,303.69 298,299.65 298.5,295.64 299,291.64 299.5,287.68 300,283.73 300.5,279.82 301,275.94 301.5,272.08 302,268.26 302.5,264.48 303,260.73 303.5,257.03 304,253.36 304.5,249.73 305,246.15 305.5,242.62 306,239.13 306.5,235.69 307,232.3 307.5,228.96 308,225.67 308.5,222.44 309,219.27 309.5,216.16 310,213.1 310.5,210.1 311,207.17 311.5,204.3 312,201.49 312.5,198.75 313,196.08 313.5,193.48 314,190.94 314.5,188.48 315,186.09 315.5,183.77 316,181.53 316.5,179.36 317,177.26 317.5,175.25 318,173.31 318.5,171.45 319,169.67 319.5,167.97 320,166.36 320.5,164.82 321,163.37 321.5,162 322,160.72 322.5,159.52 323,158.4 323.5,157.38 324,156.43 324.5,155.58 325,154.81 325.5,154.13 326,153.54 326.5,153.03 327,152.61 327.5,152.6 328,152.6 328.5,152.6 329,152.6 329.5,152.6 330,152.6 330.5,152.6 331,152.6 331.5,152.85 332,153.32 332.5,153.88 333,154.53 333.5,155.26 334,156.08 334.5,156.99 335,157.98 335.5,159.06 336,160.23 336.5,161.48 337,162.81 337.5,164.23 338,165.73 338.5,167.32 339,168.98 339.5,170.73 340,172.56 340.5,174.46 341,176.45 341.5,178.51 342,180.65 342.5,182.86 343,185.15 343.5,187.51 344,189.95 344.5,192.45 345,195.03 345.5,197.68 346,200.39 346.5,203.17 347,206.01 347.5,208.92 348,211.89 348.5,214.93 349,218.02 349.5,221.17 350,224.38 350.5,227.64 351,230.96 351.5,234.33 352,237.75 352.5,241.21 353,244.73 353.5,248.3 354,251.9 354.5,255.55 355,259.25 355.5,262.98 356,266.75 356.5,270.55 357,274.39 357.5,278.26 358,282.16 358.5,286.1 359,290.05 359.5,294.04 360,298.04 360.5,302.07 361,306.12 361.5,310.19 362,314.27 362.5,318.37 363,322.48 363.5,326.59 364,330.72 364.5,334.86 365,338.99 365.5,343.14 366,347.28 366.5,351.42 367,355.56 367.5,359.69 368,363.82 368.5,367.94 369,372.04 369.5,376.14 370,380.22 370.5,384.28 371,388.33 371.5,392.36 372,396.36 372.5,400.34 373,404.3 373.5,408.23 374,412.13 374.5,415.99 375,419.83 375.5,423.63 376,427.4 376.5,431.12 377,434.81 377.5,438.46 378,442.06 378.5,445.62 379,449.13 379.5,452.6 380,456.01 380.5,459.38 381,462.69 381.5,465.95 382,469.15 382.5,472.29 383,475.38 383.5,478.41 384,481.37 384.5,484.27 385,487.11 385.5,489.88 386,492.59 386.5,495.23 387,497.8 387.5,500.3 388,502.73 388.5,505.08 389,507.36 389.5,509.57 390,511.7 390.5,513.75 391,515.73 391.5,517.63 392,519.45 392.5,521.19 393,522.85 393.5,524.42 394,525.91 394.5,527.32 395,528.65 395.5,529.89 396,531.05 396.5,532.12 397,533.11 397.5,534.01 398,534.82 398.5,535.54 399,536.18 399.5,536.73 400,537.19 400.5,537.4 401,537.4 401.5,537.4 402,537.4 402.5,537.4 403,537.4 403.5,537.4 404,537.4 404.5,537.35 405,536.92 405.5,536.41 406,535.81 406.5,535.12 407,534.34 407.5,533.48 408,532.53 408.5,531.49 409,530.37 409.5,529.16 410,527.87 410.5,526.49 411,525.03 411.5,523.49 412,521.86 412.5,520.15 413,518.37 413.5,516.5 414,514.55 414.5,512.53 415,510.43 415.5,508.25 416,506 416.5,503.68 417,501.28 417.5,498.81 418,496.27 418.5,493.65 419,490.98 419.5,488.23 420,485.42 420.5,482.54 421,479.6 421.5,476.6 422,473.54 422.5,470.41 423,467.24 423.5,464 424,460.71 424.5,457.37 425,453.97 425.5,450.53 426,447.03 426.5,443.49 427,439.91 427.5,436.28 428,432.6 428.5,428.89 429,425.14 429.5,421.36 430,417.53 430.5,413.68 431,409.79 431.5,405.87 432,401.93 432.5,397.96 433,393.96 433.5,389.94 434,385.9 434.5,381.85 435,377.77 435.5,373.68 436,369.58 436.5,365.47 437,361.34 437.5,357.21 438,353.08 438.5,348.93 439,344.79 439.5,340.65 440,336.51 440.5,332.37 441,328.24 441.5,324.12 442,320.01 442.5,315.91 443,311.82 443.5,307.75 444,303.69 444.5,299.65 445,295.64 445.5,291.64 446,287.68 446.5,283.73 447,279.82 447.5,275.94 448,272.08 448.5,268.26 449,264.48 449.5,260.73 450,257.03 450.5,253.36 451,249.73 451.5,246.15 452,242.62 452.5,239.13 453,235.69 453.5,232.3 454,228.96 454.5,225.67 455,222.44 455.5,219.27 456,216.16 456.5,213.1 457,210.1 457.5,207.17 458,204.3 458.5,201.49 459,198.75 459.5,196.08 460,193.48 460.5,190.94 461,188.48 461.5,186.09 462,183.77 462.5,181.53 463,179.36 463.5,177.26 464,175.25 464.5,173.31 465,171.45 465.5,169.67 466,167.97 466.5,166.36 467,164.82 467.5,163.37 468,162 468.5,160.72 469,159.52 469.5,158.4 470,157.38 470.5,156.43 471,155.58 471.5,154.81 472,154.13 472.5,153.54 473,153.03 473.5,152.61 474,152.6 474.5,152.6 475,152.6 475.5,152.6 476,152.6 476.5,152.6 477,152.6 477.5,152.6 478,152.85 478.5,153.32 479,153.88 479.5,154.53 480,155.26 480.5,156.08 481,156.99 481.5,157.98 482,159.06 482.5,160.23 483,161.48 483.5,162.81 484,164.23 484.5,165.73 485,167.32 485.5,168.98 486,170.73 486.5,172.56 487,174.46 487.5,176.45 488,178.51 488.5,180.65 489,182.86 489.5,185.15 490,187.51 490.5,189.95 491,192.45 491.5,195.03 492,197.68 492.5,200.39 493,203.17 493.5,206.01 494,208.92 494.5,211.89 495,214.93 495.5,218.02 496,221.17 496.5,224.38 497,227.64 497.5,230.96 498,234.33 498.5,237.75 499,241.21 499.5,244.73 500,248.3 500.5,251.9 501,255.55 501.5,259.25 502,262.98 502.5,266.75 503,270.55 503.5,274.39 504,278.26 504.5,282.16 505,286.1 505.5,290.05 506,294.04 506.5,298.04 507,302.07 507.5,306.12 508,310.19 508.5,314.27 509,318.37 509.5,322.48 510,326.59 510.5,330.72 511,334.86 511.5,338.99 512,343.14 512.5,347.28 513,351.42 513.5,355.56 514,359.69 514.5,363.82 515,367.94 515.5,372.04 516,376.14 516.5,380.22 517,384.28 517.5,388.33 518,392.36 518.5,396.36 519,400.34 519.5,404.3 520,408.23 520.5,412.13 521,415.99 521.5,419.83 522,423.63 522.5,427.4 523,431.12 523.5,434.81 524,438.46 524.5,442.06 525,445.62 525.5,449.13 526,452.6 526.5,456.01 527,459.38 527.5,462.69 528,465.95 528.5,469.15 529,472.29 529.5,475.38 530,478.41 530.5,481.37 531,484.27 531.5,487.11 532,489.88 532.5,492.59 533,495.23 533.5,497.8 534,500.3 534.5,502.73 535,505.08 535.5,507.36 536,509.57 536.5,511.7 537,513.75 537.5,515.73 538,517.63 538.5,519.45 539,521.19 539.5,522.85 540,524.42 540.5,525.91 541,527.32 541.5,528.65 542,529.89 542.5,531.05 543,532.12 543.5,533.11 544,534.01 544.5,534.82 545,535.54 545.5,536.18 546,536.73 546.5,537.19 547,537.4 547.5,537.4 548,537.4 548.5,537.4 549,537.4 549.5,537.4 550,537.4 550.5,537.4 551,537.35 551.5,536.92 552,536.41 552.5,535.81 553,535.12 553.5,534.34 554,533.48 554.5,532.53 555,531.49 555.5,530.37 556,529.16 556.5,527.87 557,526.49 557.5,525.03 558,523.49 558.5,521.86 559,520.15 559.5,518.37 560,516.5 560.5,514.55 561,512.53 561.5,510.43 562,508.25 562.5,506 563,503.68 563.5,501.28 564,498.81 564.5,496.27 565,493.65 565.5,490.98 566,488.23 566.5,485.42 567,482.54 567.5,479.6 568,476.6 568.5,473.54 569,470.41 569.5,467.24 570,464 570.5,460.71 571,457.37 571.5,453.97 572,450.53 572.5,447.03 573,443.49 573.5,439.91 574,436.28 574.5,432.6 575,428.89 575.5,425.14 576,421.36 576.5,417.53 577,413.68 577.5,409.79 578,405.87 578.5,401.93 579,397.96 579.5,393.96 580,389.94 580.5,385.9 581,381.85 581.5,377.77 582,373.68 582.5,369.58 583,365.47 583.5,361.34 584,357.21 584.5,353.08 585,348.93 585.5,344.79 586,340.65 586.5,336.51 587,332.37 587.5,328.24 588,324.12 588.5,320.01 589,315.91 589.5,311.82 590,307.75 590.5,303.69 591,299.65 591.5,295.64 592,291.64 592.5,287.68 593,283.73 593.5,279.82 594,275.94 594.5,272.08 595,268.26 595.5,264.48 596,260.73 596.5,257.03 597,253.36 597.5,249.73 598,246.15 598.5,242.62 599,239.13 599.5,235.69 600,232.3 600.5,228.96 601,225.67 601.5,222.44 602,219.27 602.5,216.16 603,213.1 603.5,210.1 604,207.17 604.5,204.3 605,201.49 605.5,198.75 606,196.08 606.5,193.48 607,190.94 607.5,188.48 608,186.09 608.5,183.77 609,181.53 609.5,179.36 610,177.26 610.5,175.25 611,173.31 611.5,171.45 612,169.67 612.5,167.97 613,166.36 613.5,164.82 614,163.37 614.5,162 615,160.72 615.5,159.52 616,158.4 616.5,157.38 617,156.43 617.5,155.58 618,154.81 618.5,154.13 619,153.54 619.5,153.03 620,152.61 620.5,152.6 621,152.6 621.5,152.6 622,152.6 622.5,152.6 623,152.6 623.5,152.6 624,152.6 624.5,152.85 625,153.32 625.5,153.88 626,154.53 626.5,155.26 627,156.08 627.5,156.99 628,157.98 628.5,159.06 629,160.23 629.5,161.48 630,162.81 630.5,164.23 631,165.73 631.5,167.32 632,168.98 632.5,170.73 633,172.56 633.5,174.46 634,176.45 634.5,178.51 635,180.65 635.5,182.86 636,185.15 636.5,187.51 637,189.95 637.5,192.45 638,195.03 638.5,197.68 639,200.39 639.5,203.17 640,206.01 640.5,208.92 641,211.89 641.5,214.93 642,218.02 642.5,221.17 643,224.38 643.5,227.64 644,230.96 644.5,234.33 645,237.75 645.5,241.21 646,244.73 646.5,248.3 647,251.9 647.5,255.55 648,259.25 648.5,262.98 649,266.75 649.5,270.55 650,274.39 650.5,278.26 651,282.16 651.5,286.1 652,290.05 652.5,294.04 653,298.04 653.5,302.07 654,306.12 654.5,310.19 655,314.27 655.5,318.37 656,322.48 656.5,326.59 657,330.72 657.5,334.86 658,338.99 658.5,343.14 659,347.28 659.5,351.42 660,355.56 660.5,359.69 661,363.82 661.5,367.94 662,372.04 662.5,376.14 663,380.22 663.5,384.28 664,388.33 664.5,392.36 665,396.36 665.5,400.34 666,404.3 666.5,408.23 667,412.13 667.5,415.99 668,419.83 668.5,423.63 669,427.4 669.5,431.12 670,434.81 670.5,438.46 671,442.06 671.5,445.62 672,449.13 672.5,452.6 673,456.01 673.5,459.38 674,462.69 674.5,465.95 675,469.15 675.5,472.29 676,475.38 676.5,478.41 677,481.37 677.5,484.27 678,487.11 678.5,489.88 679,492.59 679.5,495.23 680,497.8 680.5,500.3 681,502.73 681.5,505.08 682,507.36 682.5,509.57 683,511.7 683.5,513.75 684,515.73 684.5,517.63 685,519.45 685.5,521.19 686,522.85 686.5,524.42 687,525.91 687.5,527.32 688,528.65 688.5,529.89 689,531.05 689.5,532.12 690,533.11 690.5,534.01 691,534.82 691.5,535.54 692,536.18 692.5,536.73 693,537.19 693.5,537.4 694,537.4 694.5,537.4 695,537.4 695.5,537.4 696,537.4 696.5,537.4 697,537.4 697.5,537.35 698,536.92 698.5,536.41 699,535.81 699.5,535.12 700,534.34 700.5,533.48 701,532.53 701.5,531.49 702,530.37 702.5,529.16 703,527.87 703.5,526.49 704,525.03 704.5,523.49 705,521.86 705.5,520.15 706,518.37 706.5,516.5 707,514.55 707.5,512.53 708,510.43 708.5,508.25 709,506 709.5,503.68 710,501.28 710.5,498.81 711,496.27 711.5,493.65 712,490.98 712.5,488.23 713,485.42 713.5,482.54 714,479.6 714.5,476.6 715,473.54 715.5,470.41 716,467.24 716.5,464 717,460.71 717.5,457.37 718,453.97 718.5,450.53 719,447.03 719.5,443.49 720,439.91 720.5,436.28 721,432.6 721.5,428.89 722,425.14 722.5,421.36 723,417.53 723.5,413.68 724,409.79 724.5,405.87 725,401.93 725.5,397.96 726,393.96 726.5,389.94 727,385.9 727.5,381.85 728,377.77 728.5,373.68 729,369.58 729.5,365.47 730,361.34 730.5,357.21 731,353.08 731.5,348.93 732,344.79 732.5,340.65 733,336.51 733.5,332.37 734,328.24 734.5,324.12 735,320.01 735.5,315.91 736,311.82 736.5,307.75 737,303.69 737.5,299.65 738,295.64 738.5,291.64 739,287.68 739.5,283.73 740,279.82 740.5,275.94 741,272.08 741.5,268.26 742,264.48 742.5,260.73 743,257.03 743.5,253.36 744,249.73 744.5,246.15 745,242.62 745.5,239.13 746,235.69 746.5,232.3 747,228.96 747.5,225.67 748,222.44 748.5,219.27 749,216.16 749.5,213.1 750,210.1 750.5,207.17 751,204.3 751.5,201.49 752,198.75 752.5,196.08 753,193.48 753.5,190.94 754,188.48 754.5,186.09 755,183.77 755.5,181.53 756,179.36 756.5,177.26 757,175.25 757.5,173.31 758,171.45 758.5,169.67 759,167.97 759.5,166.36 760,164.82 760.5,163.37 761,162 761.5,160.72 762,159.52 762.5,158.4 763,157.38 763.5,156.43 764,155.58 764.5,154.81 765,154.13 765.5,153.54 766,153.03 766.5,152.61 767,152.6 767.5,152.6 768,152.6 768.5,152.6 769,152.6 769.5,152.6 770,152.6 770.5,152.6 771,152.85 771.5,153.32 772,153.88 772.5,154.53 773,155.26 773.5,156.08 774,156.99 774.5,157.98 775,159.06 775.5,160.23 776,161.48 776.5,162.81 777,164.23 777.5,165.73 778,167.32 778.5,168.98 779,170.73 779.5,172.56 780,174.46 780.5,176.45 781,178.51 781.5,180.65 782,182.86 782.5,185.15 783,187.51 783.5,189.95 784,192.45 784.5,195.03 785,197.68 785.5,200.39 786,203.17 786.5,206.01 787,208.92 787.5,211.89 788,214.93 788.5,218.02 789,221.17 789.5,224.38 790,227.64 790.5,230.96 791,234.33 791.5,237.75 792,241.21 792.5,244.73 793,248.3 793.5,251.9 794,255.55 794.5,259.25 795,262.98 795.5,266.75 796,270.55 796.5,274.39 797,278.26 797.5,282.16 798,286.1 798.5,290.05 799,294.04 799.5,298.04 800,302.07 800.5,306.12 801,310.19 801.5,314.27 802,318.37 802.5,322.48 803,326.59 803.5,330.72 804,334.86 804.5,338.99 805,343.14 805.5,347.28 806,351.42 806.5,355.56 807,359.69 807.5,363.82 808,367.94 808.5,372.04 809,376.14 809.5,380.22 810,384.28 810.5,388.33 811,392.36 811.5,396.36 812,400.34 812.5,404.3 813,408.23 813.5,412.13 814,415.99 814.5,419.83 815,423.63 815.5,427.4 816,431.12 816.5,434.81 817,438.46 817.5,442.06 818,445.62 818.5,449.13 819,452.6 819.5,456.01 820,459.38 820.5,462.69 821,465.95 821.5,469.15 822,472.29 822.5,475.38 823,478.41 823.5,481.37 824,484.27 824.5,487.11 825,489.88 825.5,492.59 826,495.23 826.5,497.8 827,500.3 827.5,502.73 828,505.08 828.5,507.36 829,509.57 829.5,511.7 830,513.75 830.5,515.73 831,517.63 831.5,519.45 832,521.19 832.5,522.85 833,524.42 833.5,525.91 834,527.32 834.5,528.65 835,529.89 835.5,531.05 836,532.12 836.5,533.11 837,534.01 837.5,534.82 838,535.54 838.5,536.18 839,536.73 839.5,537.19 840,537.4 840.5,537.4 841,537.4 841.5,537.4 842,537.4 842.5,537.4 843,537.4 843.5,537.4 844,537.35 844.5,536.92 845,536.41 845.5,535.81 846,535.12 846.5,534.34 847,533.48 847.5,532.53 848,531.49 848.5,530.37 849,529.16 849.5,527.87 850,526.49 850.5,525.03 851,523.49 851.5,521.86 852,520.15 852.5,518.37 853,516.5 853.5,514.55 854,512.53 854.5,510.43 855,508.25 855.5,506 856,503.68 856.5,501.28 857,498.81 857.5,496.27 858,493.65 858.5,490.98 859,488.23 859.5,485.42 860,482.54 860.5,479.6 861,476.6 861.5,473.54 862,470.41 862.5,467.24 863,464 863.5,460.71 864,457.37 864.5,453.97 865,450.53 865.5,447.03 866,443.49 866.5,439.91 867,436.28 867.5,432.6 868,428.89 868.5,425.14 869,421.36 869.5,417.53 870,413.68 870.5,409.79 871,405.87 871.5,401.93 872,397.96 872.5,393.96 873,389.94 873.5,385.9 874,381.85 874.5,377.77 875,373.68 875.5,369.58 876,365.47 876.5,361.34 877,357.21 877.5,353.08 878,348.93 878.5,344.79 879,340.65 879.5,336.51 880,332.37 880.5,328.24 881,324.12 881.5,320.01 882,315.91 882.5,311.82 883,307.75 883.5,303.69 884,299.65 884.5,295.64 885,291.64 885.5,287.68 886,283.73 886.5,279.82 887,275.94 887.5,272.08 888,268.26 888.5,264.48 889,260.73 889.5,257.03 890,253.36 890.5,249.73 891,246.15 891.5,242.62 892,239.13 892.5,235.69 893,232.3 893.5,228.96 894,225.67 894.5,222.44 895,219.27 895.5,216.16 896,213.1 896.5,210.1 897,207.17 897.5,204.3 898,201.49 898.5,198.75 899,196.08 899.5,193.48 900,190.94 900.5,188.48 901,186.09 901.5,183.77 902,181.53 902.5,179.36 903,177.26 903.5,175.25 904,173.31 904.5,171.45 905,169.67 905.5,167.97 906,166.36 906.5,164.82 907,163.37 907.5,162 908,160.72 908.5,159.52 909,158.4 909.5,157.38 910,156.43 910.5,155.58 911,154.81 911.5,154.13 912,153.54 912.5,153.03 913,152.61 913.5,152.6 914,152.6 914.5,152.6 915,152.6 915.5,152.6 916,152.6 916.5,152.6 917,152.6 917.5,152.85 918,153.32 918.5,153.88 919,154.53 919.5,155.26 920,156.08 920.5,156.99 921,157.98 921.5,159.06 922,160.23 922.5,161.48 923,162.81 923.5,164.23 924,165.73 924.5,167.32 925,168.98 925.5,170.73 926,172.56 926.5,174.46 927,176.45 927.5,178.51 928,180.65 928.5,182.86 929,185.15 929.5,187.51 930,189.95 930.5,192.45 931,195.03 931.5,197.68 932,200.39 932.5,203.17 933,206.01 933.5,208.92 934,211.89 934.5,214.93 935,218.02 935.5,221.17 936,224.38 936.5,227.64 937,230.96 937.5,234.33 938,237.75 938.5,241.21 939,244.73 939.5,248.3 940,251.9 940.5,255.55 941,259.25 941.5,262.98 942,266.75 942.5,270.55 943,274.39 943.5,278.26 944,282.16 944.5,286.1 945,290.05 945.5,294.04 946,298.04 946.5,302.07 947,306.12 947.5,310.19 948,314.27 948.5,318.37 949,322.48 949.5,326.59 950,330.72 950.5,334.86 951,338.99 951.5,343.14 952,347.28 952.5,351.42 953,355.56 953.5,359.69 954,363.82 954.5,367.94 955,372.04 955.5,376.14 956,380.22 956.5,384.28 957,388.33 957.5,392.36 958,396.36 958.5,400.34 959,404.3 959.5,408.23 960,412.13 960.5,415.99 961,419.83 961.5,423.63 962,427.4 962.5,431.12 963,434.81 963.5,438.46 964,442.06 964.5,445.62 965,449.13 965.5,452.6 966,456.01 966.5,459.38 967,462.69 967.5,465.95 968,469.15 968.5,472.29 969,475.38 969.5,478.41 970,481.37 970.5,484.27 971,487.11 971.5,489.88 972,492.59 972.5,495.23 973,497.8 973.5,500.3 974,502.73 974.5,505.08 975,507.36 975.5,509.57 976,511.7 976.5,513.75 977,515.73 977.5,517.63 978,519.45 978.5,521.19 979,522.85 979.5,524.42 980,525.91 980.5,527.32 981,528.65 981.5,529.89 982,531.05 982.5,532.12 983,533.11 983.5,534.01 984,534.82 984.5,535.54 985,536.18 985.5,536.73 986,537.19 986.5,537.4 987,537.4 987.5,537.4 988,537.4 988.5,537.4 989,537.4 989.5,537.4 990,537.4 990.5,537.35 991,536.92 991.5,536.41 992,535.81 992.5,535.12 993,534.34 993.5,533.48 994,532.53 994.5,531.49 995,530.37" fill="none" stroke="#e41010" stroke-width="2.1" stroke-linejoin="round"/>
<path d="M512.4 342.4L516.4 344.8L512.4 347.2z" fill="#f0e0e0"/>
<!-- trigger T marker on grid -->
<path d="M505.5 26h16v13l-8 4.5l-8-4.5z" fill="#000" stroke="#9a2ae0" stroke-width="2"/>
<path d="M508.5 31h10M513.5 31v9" fill="none" stroke="#b030e8" stroke-width="2"/>
<!-- right trigger level marker -->
<path d="M999 24h17v8z" fill="#b020e0"/>
</svg>

<!-- CH1 marker -->
<svg class="a" style="left:0;top:330px" width="26" height="30">
<path d="M1 5h18l5 10l-5 10h-18z" fill="#000" stroke="#c80000" stroke-width="2"/>
<path d="M8 12l4-3v14" fill="none" stroke="#ff1010" stroke-width="2.4"/>
</svg>

<!-- bottom-left panel -->
<div class="a" style="left:0;top:664px;width:408px;height:104px;background:#5aa0b4"></div>
<div class="a" style="left:1.5px;top:664px;width:404px;height:51px;background:#0080de"></div>
<div class="a" style="left:1.5px;top:718px;width:404px;height:47px;background:#0080de"></div>
<div class="a" style="left:1.5px;top:664.5px;width:265px;height:25.2px;border-radius:5px;background:#000"></div>
<div class="a" style="left:1.5px;top:690.6px;width:265px;height:24px;border-radius:5px;background:#000"></div>
<div class="a" style="left:4px;top:689.6px;width:260px;height:1.1px;background:#1c4a82"></div>
<div class="a" style="left:270px;top:664.5px;width:135px;height:50.1px;border-radius:6px;background:#000"></div>
<div class="a" style="left:1.5px;top:718px;width:403.5px;height:22.6px;border-radius:5px;background:#000"></div>

<svg class="a" style="left:0;top:664px" width="30" height="80" font-family="Liberation Mono" font-size="19">
<circle cx="13" cy="14.3" r="10" fill="#e80808"/>
<circle cx="13" cy="40" r="10" fill="#e4dc18"/>
<circle cx="13" cy="65.5" r="10.2" fill="#e4dc18"/>
<path d="M10.5 9.5l3.5-3v16" fill="none" stroke="#200000" stroke-width="2.2"/>
<text x="13" y="46.8" text-anchor="middle" fill="#101000" font-size="20">2</text>
<text x="13" y="72.3" text-anchor="middle" fill="#101000" font-size="20">2</text>
</svg>

<div class="t" style="left:23px;top:671px;color:#dc2020">1V-</div>
<div class="t" style="left:134px;top:671px;color:#dc2020"><span class="z">0</span>.<span class="z">0</span><span class="z">0</span>div</div>
<div class="t" style="left:23px;top:696px;color:#d4d040">5<span class="z">0</span>.<span class="z">0</span>mV~</div>
<div class="t" style="left:134px;top:696px;color:#d4d040"><span class="z">0</span>.<span class="z">0</span><span class="z">0</span>div</div>
<div class="t" style="left:27px;top:721px;color:#d4d040">F:OFF</div>
<div class="t" style="left:286px;top:669px;color:#d82020">(25KS/s)</div>
<div class="t" style="left:278px;top:695px;color:#d82020">Depth:1<span class="z">0</span>K</div>

<!-- bottom-right -->
<div class="a" style="left:408px;top:664px;width:616px;height:104px;background:#0080de"></div>
<div class="a" style="left:408px;top:689px;width:612px;height:77px;background:#0062a4"></div>
<div class="a" style="left:408.5px;top:664px;width:127px;height:24px;border-radius:12px;background:#000"></div>
<div class="t" style="left:430px;top:669px;color:#e0e0e0;letter-spacing:1.55px">M:2<span class="z">0</span>ms</div>
<div class="a" style="left:851px;top:664px;width:164.5px;height:24px;border-radius:12px;background:#000"></div>
<svg class="a" style="left:851px;top:664px" width="60" height="24" font-family="Liberation Mono" font-size="19">
<circle cx="13" cy="12.5" r="10" fill="#e80808"/>
<path d="M11 7.8l3.5-3v15" fill="none" stroke="#200000" stroke-width="2.2"/>
<path d="M26 21.5h10l5.5-16.5h10" fill="none" stroke="#d0d0d0" stroke-width="1.6"/>
</svg>
<div class="t" style="left:904px;top:670px;color:#d8d8d8">6.<span class="z">0</span><span class="z">0</span>V</div>
<div class="a" style="left:405.5px;top:664px;width:2.5px;height:104px;background:#5aa0b4"></div>

<div class="a" style="left:412.5px;top:692.5px;width:114.5px;height:70.5px;border-radius:3px;background:#0b80e0;box-shadow:inset 2px 2px 0 #3c9ef0, inset -1px -2px 0 #0a4a8a"></div>
<div class="t" style="left:443px;top:704px;color:#0a2050">Type</div>
<div class="a" style="left:436px;top:731px;width:64px;height:25px;background:#e4e4e4"></div>
<div class="t" style="left:437px;top:734px;color:#000">Image</div>

<div class="a" style="left:765px;top:692.5px;width:113.5px;height:70.5px;border-radius:3px;background:#0b80e0;box-shadow:inset 2px 2px 0 #3c9ef0, inset -1px -2px 0 #0a4a8a"></div>
<div class="t" style="left:794px;top:720px;color:#08306a;font-family:'Liberation Sans',sans-serif;letter-spacing:2.9px;font-size:18px;-webkit-text-stroke:0.4px #08306a">Save</div>
</body></html>
